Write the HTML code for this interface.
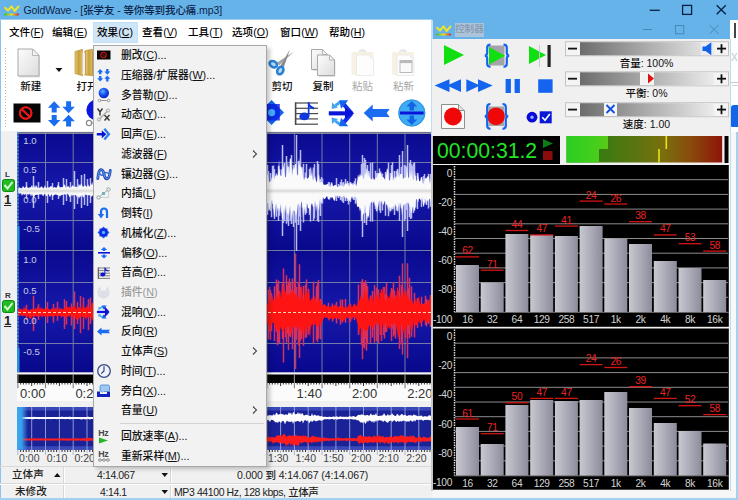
<!DOCTYPE html><html lang="zh"><head><meta charset="utf-8"><title>GoldWave</title><style>
*{margin:0;padding:0;box-sizing:border-box}
html,body{width:738px;height:500px;overflow:hidden;background:#f0f0f0}
body{position:relative;font-family:"Liberation Sans","Noto Sans CJK SC",sans-serif;font-size:12px;color:#000;font-weight:500}
.a{position:absolute}
.t{position:absolute;white-space:nowrap;line-height:1}
u{text-decoration:underline;text-underline-offset:1px}
.mi{position:absolute;left:121px;white-space:nowrap;line-height:14px;font-size:10.8px;color:#111}
.dis{color:#9a9a9a}
svg{position:absolute;overflow:visible}
</style></head><body><div class="a" style="left:0;top:0;width:738px;height:20px;background:#66b3ea"></div><div class="a" style="left:0;top:19px;width:432px;height:1px;background:#9ccef2"></div>
<svg style="left:0;top:0" width="24" height="20" viewBox="0 0 24 20"><defs><linearGradient id="ib" x1="0" x2="1"><stop offset="0" stop-color="#30c030"/><stop offset="0.5" stop-color="#e8e020"/><stop offset="1" stop-color="#e02020"/></linearGradient></defs><polyline points="4.5,7.200 8,10.500 11.500,6.300 14.600,11 19,5.800" fill="none" stroke="#f0e428" stroke-width="2" stroke-linejoin="round"/><rect x="4" y="13.600" width="15" height="1.800" rx="0.900" fill="url(#ib)"/></svg>
<div class="t" style="left:23.5px;top:5px;font-size:10.5px;letter-spacing:-0.1px;color:#0c2448" id="ttl">GoldWave - [张学友 - 等你等到我心痛.mp3]</div>
<svg style="left:640px;top:0" width="98" height="20" viewBox="0 0 98 20"><g stroke="#0a2040" stroke-width="1.300" fill="none"><line x1="9.700" y1="10.300" x2="19.800" y2="10.300"/><rect x="42.600" y="5.400" width="9" height="9"/><line x1="76.700" y1="5.200" x2="85.800" y2="14.300"/><line x1="85.800" y1="5.200" x2="76.700" y2="14.300"/></g></svg>
<div class="a" style="left:0;top:20px;width:1.2px;height:480px;background:#8cc2ec"></div>
<div class="a" style="left:1px;top:20px;width:431px;height:24px;background:#fff"></div>
<div class="a" style="left:92.700px;top:21.500px;width:45px;height:21.500px;background:#cfe6f8;border:1px solid #c4e0f6"></div>
<div class="t mb" style="left:9px;top:27px;font-size:10.6px">文件(<u>F</u>)</div>
<div class="t mb" style="left:52px;top:27px;font-size:10.6px">编辑(<u>E</u>)</div>
<div class="t mb" style="left:97px;top:27px;font-size:10.6px">效果(<u>C</u>)</div>
<div class="t mb" style="left:142px;top:27px;font-size:10.6px">查看(<u>V</u>)</div>
<div class="t mb" style="left:188px;top:27px;font-size:10.6px">工具(<u>T</u>)</div>
<div class="t mb" style="left:232px;top:27px;font-size:10.6px">选项(<u>O</u>)</div>
<div class="t mb" style="left:280px;top:27px;font-size:10.6px">窗口(<u>W</u>)</div>
<div class="t mb" style="left:329px;top:27px;font-size:10.6px">帮助(<u>H</u>)</div>
<div class="a" style="left:1px;top:44px;width:431px;height:86.5px;background:#fff"></div>
<div class="a" style="left:728px;top:20px;width:10px;height:112px;background:#fff"></div>
<div class="a" style="left:731px;top:105px;width:7px;height:22px;background:#1464e8;border-radius:3px 0 0 1px"></div><div class="a" style="left:734px;top:22.500px;width:1.500px;height:15px;background:#444"></div><div class="t" style="left:731px;top:53px;font-size:10px;color:#c4c4c4">X</div><div class="a" style="left:731px;top:82px;width:7px;height:1px;background:#c8c8c8"></div><div class="a" style="left:732px;top:85px;width:6px;height:1px;background:#d4d4d4"></div>
<div class="a" style="left:5px;top:48px;width:1px;height:80px;background:repeating-linear-gradient(#b0b0b0 0 1px,#fff 1px 3px)"></div>
<div class="a" style="left:1.2px;top:130.5px;width:430.8px;height:336px;background:#f0f0f0"></div>
<svg style="left:0;top:0" width="738" height="500" viewBox="0 0 738 500"><defs><linearGradient id="wbg" x1="0" y1="0" x2="0" y2="1"><stop offset="0" stop-color="#0a0a90"/><stop offset="0.5" stop-color="#1618aa"/><stop offset="1" stop-color="#08088c"/></linearGradient><linearGradient id="ovl" x1="0" x2="1"><stop offset="0" stop-color="#3aa8f0"/><stop offset="0.4" stop-color="#3aa0ec"/><stop offset="1" stop-color="#3aa0ec" stop-opacity="0"/></linearGradient><linearGradient id="wc" x1="0" y1="0" x2="0" y2="1"><stop offset="0" stop-color="#fff" stop-opacity="0"/><stop offset="0.5" stop-color="#b8b8b8"/><stop offset="1" stop-color="#fff" stop-opacity="0"/></linearGradient></defs><rect x="17" y="132" width="415" height="119" fill="url(#wbg)"/><rect x="17" y="251" width="415" height="122" fill="url(#wbg)"/><rect x="17" y="372.3" width="415" height="2.4" fill="#f4f4f4"/><g stroke="#737ba6" stroke-width="1"><line x1="17.9" y1="132" x2="17.9" y2="372"/><line x1="45.5" y1="132" x2="45.5" y2="372"/><line x1="73.2" y1="132" x2="73.2" y2="372"/><line x1="100.8" y1="132" x2="100.8" y2="372"/><line x1="128.5" y1="132" x2="128.5" y2="372"/><line x1="156.2" y1="132" x2="156.2" y2="372"/><line x1="183.8" y1="132" x2="183.8" y2="372"/><line x1="211.4" y1="132" x2="211.4" y2="372"/><line x1="239.1" y1="132" x2="239.1" y2="372"/><line x1="266.8" y1="132" x2="266.8" y2="372"/><line x1="294.4" y1="132" x2="294.4" y2="372"/><line x1="322.0" y1="132" x2="322.0" y2="372"/><line x1="349.7" y1="132" x2="349.7" y2="372"/><line x1="377.3" y1="132" x2="377.3" y2="372"/><line x1="405.0" y1="132" x2="405.0" y2="372"/><line x1="432.6" y1="132" x2="432.6" y2="372"/><line x1="17" y1="162.5" x2="432" y2="162.5"/><line x1="17" y1="220.5" x2="432" y2="220.5"/><line x1="17" y1="250.5" x2="432" y2="250.5"/><line x1="17" y1="282.5" x2="432" y2="282.5"/><line x1="17" y1="343.5" x2="432" y2="343.5"/></g><rect x="17" y="132.200" width="415" height="1.800" fill="#868c96"/><path d="M26.5,182.0V199.0M33.5,176.0V208.0M38.5,182.0V199.0M47.5,181.0V203.0M52.5,183.0V200.0M58.5,182.0V199.0M63.5,178.0V205.0M66.5,179.0V201.0M70.5,182.0V202.0M74.5,171.0V209.0M77.5,179.0V204.0M81.5,175.0V208.0M84.5,174.0V205.0M87.5,179.0V206.0M90.5,178.0V203.0M267.5,165.0V215.0M270.5,173.0V211.0M274.5,169.0V219.0M278.5,166.0V221.0M282.5,145.0V236.0M284.5,163.0V221.0M286.5,160.0V217.0M288.5,167.0V226.0M291.5,155.0V221.0M293.5,165.0V227.0M296.5,135.0V251.0M298.5,161.0V225.0M300.5,150.0V231.0M303.5,167.0V219.0M306.5,164.0V213.0M309.5,169.0V215.0M313.5,171.0V217.0M317.5,161.0V221.0M318.5,164.0V222.0M321.5,177.0V203.0M328.5,182.0V199.0M336.5,178.0V201.0M340.5,182.0V200.0M345.5,179.0V201.0M350.5,182.0V202.0M354.5,181.0V200.0M361.5,165.0V221.0M362.5,155.0V237.0M364.5,161.0V223.0M366.5,169.0V225.0M367.5,165.0V211.0M370.5,171.0V219.0M372.5,165.0V213.0M376.5,173.0V211.0M380.5,174.0V213.0M385.5,172.0V209.0M390.5,173.0V211.0M394.5,171.0V215.0M397.5,169.0V211.0M399.5,155.0V221.0M402.5,151.0V237.0M404.5,165.0V221.0M407.5,145.0V231.0M409.5,163.0V217.0M410.5,160.0V219.0M413.5,171.0V213.0M417.5,175.0V209.0M421.5,177.0V207.0M426.5,178.0V205.0M430.5,174.0V206.0M267.5,173.1V208.3M268.5,170.9V210.4M271.5,177.7V217.2M272.5,165.8V204.0M273.5,165.5V208.7M276.5,173.6V216.7M278.5,170.1V215.2M279.5,169.8V215.7M281.5,169.2V212.6M283.5,172.1V223.0M286.5,156.1V223.8M287.5,166.7V221.5M290.5,158.7V220.7M291.5,162.6V224.1M295.5,168.1V222.8M296.5,169.2V218.8M299.5,166.5V216.6M302.5,167.2V207.5M303.5,163.8V222.6M305.5,172.6V214.7M310.5,167.6V221.4M313.5,167.6V221.0M314.5,164.1V218.5M320.5,179.1V215.9M322.5,178.5V203.4M329.5,182.2V199.4M338.5,183.9V198.1M341.5,179.6V200.4M342.5,182.9V201.7M343.5,182.1V203.0M347.5,181.1V201.1M348.5,183.0V204.6M353.5,183.1V199.8M355.5,178.2V203.7M361.5,164.1V213.8M363.5,162.9V209.9M364.5,157.9V222.6M365.5,160.1V213.1M368.5,171.1V207.0M370.5,162.9V221.4M372.5,162.2V221.4M375.5,170.8V209.0M377.5,173.4V207.2M379.5,168.6V210.6M382.5,173.6V210.4M385.5,173.6V215.8M388.5,162.7V216.2M391.5,164.9V206.8M392.5,161.9V208.9M396.5,170.7V210.5M401.5,166.7V208.2M402.5,174.2V220.5M405.5,165.4V219.3M406.5,166.4V210.1M407.5,171.5V220.5M411.5,164.2V218.5M412.5,166.3V206.5M413.5,163.3V205.1M414.5,162.2V210.7M415.5,175.8V207.4M417.5,173.1V205.1M423.5,176.1V201.6M424.5,174.0V203.2M428.5,173.7V208.6M430.5,178.1V206.8M94.5,161.2V209.9M97.5,168.1V213.3M100.5,178.4V210.7M103.5,176.7V203.7M106.5,182.0V205.0M109.5,159.0V209.6M112.5,166.8V214.9M115.5,159.2V209.0M118.5,174.6V207.9M121.5,174.0V221.2M124.5,159.5V207.8M127.5,173.3V214.0M130.5,167.0V215.4M133.5,175.2V201.2M136.5,175.1V202.6M139.5,167.3V202.7M142.5,179.0V217.0M145.5,173.5V221.1M148.5,168.3V223.0M151.5,176.6V214.1M154.5,160.4V203.6M157.5,156.4V206.2M160.5,160.6V226.6M163.5,159.4V210.1M166.5,177.2V215.0M169.5,156.8V209.6M172.5,157.4V205.8M175.5,156.9V203.2M178.5,171.6V225.0M181.5,159.4V225.2M184.5,158.4V221.3M187.5,162.1V207.1M190.5,168.4V206.7M193.5,161.3V219.5M196.5,172.8V204.5M199.5,154.9V223.2M202.5,165.3V216.5M205.5,157.7V214.3M208.5,169.1V211.5M211.5,172.6V203.6M214.5,162.8V213.4M217.5,164.7V204.6M220.5,170.1V206.5M223.5,175.9V209.5M226.5,158.3V212.9M229.5,169.0V218.3M232.5,173.2V203.2M235.5,165.8V215.5M238.5,162.8V214.0M241.5,161.9V221.2M244.5,173.4V215.0M247.5,167.7V208.0M250.5,169.6V216.1M253.5,157.5V224.8M256.5,173.6V217.7M259.5,179.5V203.1M262.5,168.2V222.9M265.5,177.0V220.2" stroke="#b8bcf2" stroke-width="1.5" fill="none"/><polygon points="18,189.2 19,186.9 20,188.0 21,188.2 22,188.2 23,185.7 24,187.6 25,188.1 26,186.2 27,186.4 28,188.2 29,187.6 30,187.6 31,187.0 32,184.8 33,188.2 34,184.8 35,187.9 36,184.7 37,187.1 38,188.1 39,187.9 40,187.8 41,186.7 42,186.2 43,188.6 44,187.7 45,184.9 46,188.0 47,187.8 48,187.0 49,187.9 50,186.3 51,186.4 52,186.2 53,188.3 54,187.3 55,186.9 56,188.0 57,187.0 58,184.6 59,185.9 60,187.4 61,187.1 62,187.3 63,187.1 64,184.4 65,184.9 66,188.0 67,186.8 68,186.3 69,186.6 70,188.2 71,187.7 72,185.5 73,185.5 74,186.9 75,186.7 76,186.5 77,187.4 78,187.0 79,183.6 80,186.3 81,183.4 82,184.7 83,187.3 84,186.0 85,185.6 86,185.8 87,187.4 88,183.9 89,186.4 90,186.2 91,182.8 92,185.4 93,180.9 94,185.5 95,184.4 96,183.9 97,182.0 98,185.4 99,186.0 100,184.8 101,184.6 102,183.6 103,183.5 104,182.8 105,177.1 106,177.5 107,180.3 108,183.6 109,180.9 110,184.9 111,183.6 112,176.6 113,177.7 114,181.7 115,181.9 116,180.5 117,181.8 118,176.9 119,181.7 120,179.9 121,182.4 122,180.3 123,183.6 124,183.2 125,179.9 126,183.0 127,180.0 128,179.0 129,180.6 130,181.3 131,180.4 132,177.5 133,181.4 134,183.0 135,182.4 136,181.9 137,180.4 138,181.7 139,181.1 140,177.6 141,180.5 142,170.8 143,181.3 144,174.5 145,177.3 146,182.7 147,180.7 148,180.9 149,180.4 150,174.9 151,173.6 152,172.2 153,176.7 154,182.7 155,180.1 156,182.7 157,182.3 158,180.8 159,178.4 160,172.4 161,181.1 162,178.4 163,182.6 164,182.1 165,177.3 166,178.1 167,176.7 168,175.2 169,169.1 170,180.0 171,176.3 172,181.8 173,173.1 174,178.5 175,179.7 176,177.3 177,171.7 178,177.8 179,181.0 180,172.0 181,176.8 182,178.9 183,176.3 184,166.0 185,177.7 186,176.1 187,172.7 188,181.7 189,175.9 190,181.1 191,178.7 192,172.0 193,182.1 194,172.3 195,175.7 196,179.2 197,172.4 198,180.3 199,177.6 200,177.0 201,175.8 202,176.1 203,175.9 204,170.4 205,178.4 206,176.7 207,178.6 208,168.6 209,178.8 210,181.3 211,176.1 212,180.8 213,170.0 214,176.0 215,178.5 216,166.1 217,178.8 218,175.7 219,174.7 220,180.8 221,181.7 222,181.3 223,181.0 224,181.5 225,175.5 226,176.2 227,176.8 228,179.1 229,165.4 230,178.0 231,176.8 232,176.8 233,176.9 234,174.4 235,179.9 236,175.8 237,180.2 238,169.2 239,178.8 240,178.5 241,167.0 242,168.9 243,179.4 244,180.3 245,178.2 246,177.1 247,182.3 248,178.0 249,170.8 250,176.1 251,174.2 252,181.7 253,180.3 254,182.4 255,176.4 256,180.6 257,174.8 258,183.1 259,182.8 260,180.3 261,172.1 262,180.1 263,176.4 264,181.8 265,178.3 266,176.8 267,174.0 268,175.4 269,181.9 270,181.8 271,180.6 272,180.1 273,168.8 274,179.7 275,176.8 276,174.9 277,175.6 278,175.2 279,159.8 280,174.4 281,176.3 282,175.6 283,163.7 284,168.7 285,177.3 286,176.7 287,170.1 288,160.6 289,174.2 290,158.3 291,159.6 292,176.1 293,167.2 294,170.1 295,164.4 296,163.6 297,174.0 298,175.7 299,157.8 300,167.0 301,166.1 302,168.9 303,177.1 304,180.6 305,176.8 306,177.9 307,178.4 308,178.4 309,176.8 310,173.0 311,176.8 312,168.4 313,180.8 314,178.8 315,175.4 316,180.7 317,182.5 318,176.6 319,174.0 320,183.3 321,181.6 322,182.0 323,183.4 324,185.3 325,184.4 326,184.8 327,184.3 328,183.8 329,186.4 330,187.1 331,183.5 332,181.8 333,186.2 334,185.5 335,185.0 336,184.8 337,186.4 338,186.9 339,186.4 340,184.6 341,186.5 342,184.7 343,186.7 344,185.9 345,183.3 346,184.5 347,182.5 348,184.3 349,186.7 350,181.8 351,184.2 352,182.5 353,185.3 354,183.9 355,183.8 356,186.5 357,182.7 358,174.3 359,177.4 360,173.3 361,176.5 362,173.9 363,178.2 364,179.1 365,171.8 366,174.9 367,167.3 368,177.2 369,170.1 370,178.1 371,179.0 372,179.3 373,177.2 374,179.9 375,179.0 376,177.0 377,178.0 378,172.9 379,173.2 380,173.6 381,170.6 382,177.3 383,176.7 384,178.1 385,179.7 386,175.6 387,167.7 388,170.4 389,180.1 390,180.7 391,175.9 392,171.3 393,180.9 394,176.2 395,178.8 396,176.1 397,177.7 398,168.1 399,177.6 400,173.9 401,174.3 402,173.3 403,179.0 404,177.8 405,177.8 406,177.0 407,166.1 408,176.6 409,178.8 410,169.0 411,177.4 412,170.3 413,180.7 414,178.2 415,170.6 416,180.8 417,180.6 418,171.9 419,180.6 420,181.6 421,177.7 422,177.2 423,183.9 424,182.9 425,177.6 426,179.2 427,177.3 428,175.8 429,177.1 430,183.8 431,179.1 432,179.7 432,204.2 431,202.8 430,198.6 429,199.6 428,202.0 427,199.8 426,204.7 425,198.0 424,207.2 423,205.3 422,197.3 421,200.4 420,199.2 419,198.2 418,203.1 417,199.8 416,198.8 415,209.5 414,210.4 413,205.5 412,210.7 411,213.3 410,207.1 409,204.7 408,202.3 407,203.0 406,203.2 405,205.6 404,203.8 403,207.1 402,215.9 401,202.4 400,207.5 399,202.3 398,213.6 397,206.0 396,207.2 395,203.6 394,210.2 393,205.6 392,211.8 391,206.7 390,213.7 389,206.1 388,210.1 387,204.0 386,205.6 385,200.4 384,203.3 383,205.4 382,200.2 381,204.0 380,200.3 379,201.7 378,206.2 377,213.2 376,204.6 375,207.1 374,201.3 373,203.4 372,201.2 371,203.1 370,203.5 369,218.6 368,215.2 367,220.7 366,213.2 365,204.1 364,213.2 363,214.4 362,222.3 361,207.8 360,211.7 359,206.7 358,206.8 357,206.8 356,197.3 355,196.7 354,196.9 353,199.5 352,196.3 351,198.9 350,200.3 349,201.2 348,199.0 347,198.2 346,197.4 345,198.5 344,195.6 343,196.2 342,197.4 341,196.8 340,195.6 339,197.0 338,195.3 337,197.1 336,195.1 335,200.4 334,200.8 333,198.5 332,196.8 331,198.6 330,196.8 329,199.9 328,198.6 327,196.1 326,197.5 325,198.7 324,199.3 323,196.9 322,200.0 321,204.6 320,198.2 319,210.7 318,207.9 317,203.9 316,211.9 315,200.8 314,206.7 313,207.0 312,203.0 311,205.6 310,213.0 309,207.9 308,208.4 307,202.8 306,207.2 305,214.2 304,206.6 303,218.6 302,201.6 301,203.2 300,208.3 299,204.4 298,203.4 297,212.0 296,216.6 295,211.3 294,210.7 293,210.0 292,220.5 291,212.2 290,205.6 289,216.4 288,212.6 287,215.3 286,204.7 285,213.7 284,207.2 283,218.6 282,218.8 281,203.2 280,211.6 279,207.5 278,211.6 277,206.9 276,203.1 275,212.9 274,218.3 273,203.8 272,199.6 271,202.3 270,210.6 269,208.5 268,202.9 267,203.1 266,199.5 265,199.2 264,207.3 263,202.6 262,200.5 261,205.5 260,200.2 259,200.0 258,204.1 257,210.7 256,209.3 255,204.8 254,210.3 253,202.9 252,200.8 251,208.4 250,204.7 249,203.6 248,204.6 247,202.9 246,208.0 245,209.3 244,203.0 243,205.4 242,202.2 241,205.0 240,208.9 239,203.5 238,204.3 237,200.8 236,216.3 235,202.4 234,204.0 233,200.6 232,206.5 231,205.8 230,201.8 229,205.6 228,210.9 227,203.8 226,213.3 225,201.6 224,201.3 223,200.8 222,206.1 221,206.3 220,201.3 219,204.3 218,211.7 217,206.1 216,204.7 215,204.9 214,209.5 213,209.7 212,207.2 211,216.5 210,204.4 209,201.8 208,204.0 207,202.7 206,208.0 205,202.7 204,201.1 203,205.4 202,206.0 201,201.8 200,205.2 199,209.5 198,200.3 197,202.0 196,202.8 195,208.9 194,200.2 193,200.7 192,205.1 191,208.3 190,201.8 189,206.1 188,200.8 187,201.6 186,212.9 185,201.6 184,208.7 183,202.8 182,202.3 181,205.9 180,201.0 179,207.6 178,202.3 177,206.8 176,200.8 175,200.2 174,211.3 173,202.4 172,209.0 171,200.6 170,204.3 169,206.2 168,200.9 167,202.9 166,206.8 165,204.7 164,200.8 163,202.2 162,209.3 161,200.3 160,201.8 159,204.2 158,211.1 157,206.0 156,200.9 155,203.8 154,212.3 153,201.4 152,201.0 151,200.7 150,203.1 149,202.8 148,201.7 147,206.1 146,201.9 145,202.1 144,204.0 143,200.7 142,200.8 141,206.1 140,199.6 139,204.9 138,202.8 137,203.4 136,210.9 135,198.7 134,206.9 133,201.2 132,201.0 131,200.7 130,208.3 129,210.7 128,200.0 127,198.2 126,204.2 125,206.2 124,198.9 123,198.4 122,203.1 121,199.4 120,204.6 119,205.4 118,198.4 117,200.0 116,201.6 115,198.0 114,205.5 113,199.4 112,200.4 111,205.3 110,206.9 109,198.8 108,197.3 107,199.0 106,199.7 105,202.9 104,196.7 103,198.4 102,201.6 101,198.2 100,198.4 99,198.8 98,200.3 97,200.2 96,196.1 95,196.8 94,198.3 93,195.3 92,196.2 91,196.7 90,194.9 89,195.6 88,195.0 87,195.3 86,194.7 85,194.5 84,196.4 83,197.8 82,194.4 81,196.8 80,196.2 79,199.1 78,196.1 77,197.3 76,194.9 75,194.9 74,195.5 73,194.6 72,196.6 71,194.3 70,197.4 69,196.1 68,194.1 67,193.6 66,195.1 65,194.3 64,194.3 63,194.6 62,195.1 61,195.3 60,196.8 59,195.2 58,195.1 57,194.9 56,194.6 55,194.6 54,195.3 53,196.0 52,194.2 51,195.0 50,197.4 49,195.1 48,193.6 47,196.0 46,196.0 45,193.6 44,194.7 43,196.6 42,194.3 41,194.5 40,194.3 39,194.2 38,195.0 37,194.5 36,195.1 35,195.1 34,197.6 33,196.6 32,194.0 31,196.8 30,193.5 29,194.8 28,194.2 27,194.3 26,193.4 25,194.6 24,194.7 23,193.6 22,196.0 21,193.1 20,193.4 19,193.5 18,193.1" fill="#fafafa"/><rect x="18" y="187" width="414" height="8" fill="url(#wc)" opacity="0.55"/><path d="M26.5,304.8V320.2M33.5,295.8V331.0M38.5,304.2V319.7M47.5,302.0V323.1M53.5,303.9V322.8M57.5,301.7V320.8M64.5,299.2V329.1M66.5,300.9V324.5M71.5,303.6V325.4M74.5,291.6V328.9M77.5,301.8V324.0M80.5,296.1V333.3M83.5,297.4V329.0M88.5,299.1V330.3M90.5,297.7V324.0M268.5,289.6V339.5M271.5,293.0V330.9M274.5,286.2V341.1M278.5,285.4V342.5M283.5,268.4V362.5M283.5,281.4V342.9M286.5,275.3V342.4M288.5,284.3V349.9M292.5,278.6V348.7M292.5,285.3V349.3M295.5,253.4V369.1M298.5,282.0V345.3M299.5,264.3V357.9M303.5,285.8V345.7M306.5,279.5V331.4M308.5,288.7V334.8M313.5,290.6V343.4M316.5,286.3V340.2M318.5,280.1V338.6M321.5,300.8V324.1M328.5,302.7V319.3M336.5,301.8V323.6M340.5,303.8V320.3M345.5,299.1V322.8M350.5,303.7V321.7M354.5,303.7V320.0M361.5,281.3V344.7M362.5,278.9V359.2M364.5,282.5V348.6M366.5,286.5V350.7M366.5,283.8V332.7M370.5,295.4V343.2M372.5,291.0V337.5M376.5,294.0V335.2M381.5,295.1V331.7M385.5,295.0V331.6M391.5,293.0V334.5M394.5,290.7V334.6M397.5,293.1V329.6M399.5,275.7V349.0M402.5,263.6V354.4M405.5,290.5V338.0M407.5,263.2V358.2M409.5,286.7V338.2M409.5,277.7V337.1M414.5,292.8V331.4M417.5,297.9V327.9M421.5,296.8V326.2M426.5,299.1V326.6M430.5,294.9V327.1M269.5,286.7V332.1M270.5,290.0V339.7M276.5,279.5V331.8M277.5,283.7V345.3M278.5,280.4V337.0M279.5,291.2V343.2M282.5,283.4V338.8M285.5,292.7V336.9M287.5,285.1V333.8M288.5,281.4V334.2M289.5,278.6V336.0M290.5,283.1V337.3M291.5,289.7V333.6M294.5,281.6V336.6M296.5,287.0V339.8M300.5,287.1V340.9M301.5,293.1V339.1M305.5,284.6V337.9M306.5,293.7V337.3M313.5,281.6V333.8M316.5,295.7V331.1M317.5,282.8V341.9M318.5,293.9V329.8M320.5,298.7V339.2M332.5,303.4V321.5M340.5,299.5V324.8M342.5,299.5V322.4M349.5,304.3V322.9M358.5,284.5V334.9M361.5,284.6V337.2M363.5,282.5V346.7M365.5,280.2V338.7M367.5,286.2V344.2M374.5,285.1V342.8M376.5,287.4V341.0M378.5,289.6V343.5M380.5,293.3V334.7M381.5,297.4V340.9M383.5,287.0V335.0M384.5,286.9V338.5M385.5,294.0V331.9M386.5,282.7V332.0M391.5,288.0V341.1M392.5,289.4V328.8M393.5,282.1V336.6M395.5,295.6V338.6M398.5,291.4V333.3M399.5,288.9V342.2M401.5,285.0V344.5M402.5,292.1V331.1M407.5,294.7V330.3M408.5,288.2V334.0M411.5,286.2V336.7M414.5,292.7V337.4M421.5,299.5V326.7M425.5,295.7V324.9M428.5,300.2V324.1M94.5,290.5V318.1M97.5,298.5V339.4M100.5,291.1V332.6M103.5,293.8V342.2M106.5,296.2V324.8M109.5,292.2V344.8M112.5,284.5V329.0M115.5,300.4V330.1M118.5,301.3V326.2M121.5,285.2V340.3M124.5,301.9V345.9M127.5,286.4V337.6M130.5,280.8V326.7M133.5,301.0V333.7M136.5,295.6V330.7M139.5,287.6V325.6M142.5,285.7V340.9M145.5,277.6V328.8M148.5,300.5V342.7M151.5,289.2V345.5M154.5,287.7V339.3M157.5,299.1V336.6M160.5,284.3V336.4M163.5,291.0V341.4M166.5,296.8V333.7M169.5,289.5V346.4M172.5,289.5V339.1M175.5,297.9V347.6M178.5,288.1V328.6M181.5,290.7V335.9M184.5,282.6V330.8M187.5,283.5V330.0M190.5,299.9V335.4M193.5,275.4V333.1M196.5,279.5V336.5M199.5,278.4V336.8M202.5,298.6V328.3M205.5,299.5V342.5M208.5,286.4V326.0M211.5,286.3V324.9M214.5,279.5V333.3M217.5,286.8V330.8M220.5,290.8V324.8M223.5,286.5V331.0M226.5,288.4V345.1M229.5,284.6V340.7M232.5,291.7V341.3M235.5,290.2V348.6M238.5,286.9V344.7M241.5,283.1V337.7M244.5,279.4V328.2M247.5,276.5V328.5M250.5,296.0V332.5M253.5,297.8V326.9M256.5,293.7V330.9M259.5,299.5V325.5M262.5,295.4V336.1M265.5,289.8V329.8" stroke="#d8305c" stroke-width="1.5" fill="none"/><polygon points="18,310.3 19,308.8 20,308.6 21,308.8 22,309.3 23,310.1 24,305.9 25,309.1 26,307.2 27,310.1 28,309.6 29,309.7 30,310.2 31,308.7 32,309.6 33,309.1 34,309.7 35,308.4 36,308.3 37,308.6 38,305.5 39,309.5 40,306.9 41,308.7 42,307.4 43,309.5 44,308.2 45,309.0 46,308.0 47,306.5 48,309.2 49,308.7 50,309.4 51,309.5 52,307.9 53,308.7 54,308.9 55,308.7 56,306.8 57,309.3 58,309.7 59,309.2 60,306.8 61,309.5 62,307.9 63,309.8 64,308.7 65,306.5 66,307.7 67,307.9 68,306.4 69,307.9 70,305.9 71,309.5 72,305.5 73,307.6 74,305.0 75,306.3 76,308.8 77,308.8 78,306.4 79,307.8 80,306.8 81,308.1 82,309.1 83,303.6 84,307.7 85,306.8 86,308.5 87,303.6 88,308.5 89,308.0 90,308.6 91,306.9 92,301.8 93,303.7 94,308.0 95,308.2 96,306.4 97,307.1 98,306.8 99,306.2 100,302.3 101,307.2 102,306.9 103,307.1 104,305.6 105,307.0 106,306.3 107,303.7 108,306.0 109,306.2 110,304.9 111,304.1 112,305.6 113,303.0 114,303.4 115,305.4 116,302.6 117,303.6 118,301.2 119,301.0 120,299.9 121,303.5 122,304.1 123,302.0 124,293.4 125,305.2 126,295.7 127,298.2 128,305.0 129,299.7 130,299.7 131,300.3 132,302.2 133,301.7 134,296.4 135,298.0 136,300.2 137,300.1 138,303.2 139,301.2 140,300.3 141,300.9 142,300.1 143,303.1 144,299.9 145,294.0 146,302.7 147,300.4 148,301.9 149,299.1 150,299.9 151,300.9 152,297.6 153,294.8 154,297.3 155,299.2 156,303.4 157,303.6 158,302.2 159,293.0 160,300.5 161,301.1 162,299.0 163,300.7 164,296.9 165,300.4 166,294.0 167,298.0 168,292.9 169,302.4 170,296.3 171,298.1 172,300.3 173,295.1 174,302.8 175,300.2 176,301.1 177,301.8 178,295.6 179,302.5 180,292.9 181,297.5 182,297.7 183,296.9 184,299.6 185,298.3 186,297.3 187,303.1 188,293.3 189,301.1 190,299.0 191,303.0 192,300.3 193,300.9 194,292.9 195,300.0 196,296.4 197,299.8 198,297.9 199,303.2 200,289.0 201,289.5 202,299.9 203,300.4 204,290.0 205,297.4 206,296.6 207,300.5 208,293.3 209,300.2 210,287.8 211,289.0 212,303.1 213,293.9 214,290.6 215,300.8 216,294.6 217,302.4 218,300.5 219,297.2 220,301.3 221,300.8 222,293.1 223,302.8 224,293.5 225,302.4 226,298.7 227,287.6 228,301.6 229,289.1 230,294.4 231,290.0 232,297.5 233,288.6 234,292.3 235,289.4 236,297.5 237,299.8 238,298.3 239,302.8 240,302.1 241,300.4 242,300.2 243,299.2 244,296.3 245,302.0 246,299.8 247,288.2 248,294.3 249,303.5 250,293.9 251,293.0 252,294.5 253,290.3 254,303.8 255,302.7 256,303.2 257,292.6 258,303.8 259,302.1 260,297.6 261,294.3 262,301.0 263,294.3 264,296.3 265,303.0 266,295.5 267,304.1 268,304.0 269,296.1 270,301.9 271,301.2 272,294.6 273,297.7 274,301.7 275,299.9 276,292.4 277,295.9 278,298.0 279,293.9 280,289.4 281,299.2 282,283.0 283,294.0 284,277.6 285,292.9 286,290.0 287,295.8 288,292.9 289,295.6 290,292.9 291,291.2 292,293.2 293,288.8 294,292.2 295,296.0 296,292.8 297,298.9 298,292.8 299,300.6 300,297.0 301,289.1 302,284.3 303,300.2 304,298.8 305,291.8 306,287.4 307,291.7 308,294.8 309,288.5 310,300.9 311,300.1 312,297.0 313,299.2 314,299.1 315,294.4 316,301.6 317,302.7 318,296.5 319,298.0 320,302.1 321,299.3 322,306.7 323,304.7 324,304.7 325,303.8 326,307.0 327,305.2 328,306.5 329,307.1 330,307.0 331,306.1 332,306.5 333,306.2 334,305.9 335,304.5 336,304.5 337,306.3 338,307.1 339,306.6 340,306.0 341,307.0 342,304.7 343,306.2 344,307.0 345,308.3 346,307.2 347,308.3 348,305.3 349,305.9 350,303.4 351,306.3 352,307.6 353,305.3 354,305.1 355,303.5 356,306.4 357,305.4 358,301.1 359,302.2 360,299.1 361,293.9 362,298.9 363,298.2 364,293.9 365,285.3 366,300.5 367,287.4 368,296.5 369,301.7 370,297.0 371,297.8 372,295.7 373,298.7 374,302.5 375,297.0 376,291.6 377,297.5 378,291.2 379,299.7 380,297.6 381,288.6 382,289.2 383,293.1 384,286.1 385,301.3 386,300.2 387,295.0 388,296.3 389,298.4 390,293.7 391,290.6 392,302.4 393,290.2 394,298.1 395,295.3 396,301.4 397,287.7 398,287.3 399,296.2 400,297.4 401,291.8 402,300.0 403,284.6 404,296.0 405,291.5 406,288.2 407,298.7 408,293.6 409,300.6 410,299.5 411,300.1 412,299.4 413,302.7 414,303.9 415,301.9 416,297.4 417,303.7 418,299.1 419,296.1 420,303.5 421,305.4 422,303.1 423,304.2 424,303.6 425,303.0 426,305.6 427,302.0 428,299.0 429,304.1 430,295.3 431,296.1 432,299.7 432,323.5 431,321.6 430,324.9 429,319.5 428,323.0 427,322.7 426,321.9 425,321.1 424,319.3 423,321.0 422,323.0 421,321.9 420,324.2 419,320.6 418,323.6 417,324.5 416,325.7 415,324.5 414,321.1 413,325.9 412,333.0 411,327.3 410,326.8 409,324.4 408,325.8 407,323.9 406,340.3 405,329.5 404,329.1 403,335.1 402,326.1 401,324.1 400,335.5 399,334.8 398,340.1 397,328.1 396,325.5 395,323.8 394,322.6 393,327.2 392,322.7 391,325.5 390,329.4 389,328.3 388,326.1 387,331.6 386,323.8 385,322.2 384,327.9 383,327.3 382,321.9 381,338.2 380,322.7 379,326.6 378,324.5 377,322.9 376,325.5 375,323.9 374,328.9 373,329.8 372,325.9 371,327.0 370,324.9 369,326.0 368,330.6 367,330.3 366,330.2 365,332.5 364,328.5 363,329.2 362,340.7 361,329.4 360,327.8 359,335.1 358,325.3 357,322.0 356,318.0 355,317.1 354,317.2 353,317.0 352,320.3 351,317.2 350,317.6 349,317.5 348,318.7 347,317.0 346,318.9 345,318.0 344,321.4 343,319.7 342,321.6 341,320.5 340,317.7 339,319.9 338,318.6 337,318.4 336,317.7 335,318.7 334,318.4 333,320.5 332,318.4 331,317.8 330,319.6 329,321.3 328,317.3 327,318.0 326,317.6 325,317.8 324,317.4 323,320.3 322,321.3 321,327.6 320,322.0 319,328.2 318,326.5 317,327.2 316,323.8 315,324.5 314,325.1 313,324.7 312,324.1 311,327.6 310,338.5 309,329.4 308,324.9 307,333.2 306,327.8 305,337.3 304,325.5 303,338.4 302,333.2 301,328.0 300,330.7 299,324.9 298,332.6 297,325.2 296,328.3 295,326.4 294,327.3 293,327.3 292,331.8 291,334.3 290,333.7 289,325.8 288,327.6 287,327.1 286,339.9 285,326.1 284,331.1 283,332.9 282,329.8 281,329.0 280,326.0 279,334.5 278,330.7 277,330.5 276,325.9 275,329.7 274,323.9 273,322.0 272,324.0 271,325.1 270,333.3 269,326.0 268,324.1 267,322.5 266,325.3 265,323.5 264,329.6 263,331.1 262,331.0 261,321.0 260,324.5 259,325.6 258,320.7 257,325.9 256,323.6 255,323.9 254,326.6 253,330.0 252,322.6 251,326.5 250,322.9 249,325.6 248,328.8 247,324.9 246,326.2 245,325.4 244,322.1 243,324.2 242,325.1 241,330.1 240,322.6 239,324.5 238,328.1 237,332.1 236,335.7 235,326.5 234,322.3 233,328.8 232,330.6 231,321.7 230,322.9 229,323.3 228,327.3 227,323.5 226,328.4 225,324.0 224,327.9 223,324.7 222,328.3 221,325.2 220,324.7 219,327.7 218,325.1 217,334.0 216,325.5 215,324.9 214,322.3 213,326.9 212,331.8 211,322.6 210,323.0 209,322.2 208,328.7 207,334.3 206,335.9 205,327.2 204,321.9 203,325.7 202,322.0 201,322.3 200,322.0 199,323.3 198,321.7 197,329.7 196,323.4 195,330.0 194,325.4 193,323.5 192,323.9 191,329.9 190,324.8 189,322.2 188,326.3 187,322.8 186,328.7 185,326.6 184,322.1 183,325.6 182,322.8 181,323.4 180,326.0 179,322.5 178,321.5 177,323.0 176,323.9 175,326.5 174,328.0 173,323.1 172,325.7 171,332.9 170,323.6 169,327.2 168,324.9 167,326.7 166,325.5 165,335.4 164,329.3 163,325.9 162,326.7 161,325.3 160,328.6 159,323.2 158,325.0 157,333.6 156,329.3 155,325.8 154,334.9 153,329.4 152,326.4 151,321.2 150,326.0 149,323.2 148,330.4 147,328.3 146,320.5 145,323.9 144,320.6 143,320.6 142,320.6 141,321.7 140,323.8 139,324.4 138,324.3 137,326.1 136,323.2 135,324.2 134,328.5 133,328.9 132,322.5 131,325.1 130,320.2 129,324.9 128,323.3 127,319.9 126,320.1 125,322.4 124,319.6 123,324.3 122,326.6 121,329.2 120,322.5 119,325.9 118,322.5 117,319.2 116,323.3 115,320.6 114,323.2 113,318.6 112,318.7 111,323.4 110,321.9 109,321.6 108,322.9 107,318.5 106,318.3 105,318.3 104,323.7 103,323.4 102,324.4 101,318.1 100,319.1 99,320.2 98,321.0 97,318.8 96,321.9 95,318.3 94,321.8 93,318.5 92,321.6 91,316.3 90,316.8 89,316.6 88,317.4 87,317.2 86,320.4 85,316.9 84,317.7 83,317.2 82,316.4 81,316.6 80,317.0 79,320.2 78,317.9 77,319.3 76,319.7 75,316.5 74,316.3 73,320.7 72,315.8 71,316.5 70,315.2 69,317.1 68,315.9 67,316.8 66,318.5 65,316.0 64,317.4 63,316.1 62,316.5 61,318.3 60,315.1 59,316.2 58,316.4 57,316.1 56,315.8 55,316.0 54,316.3 53,318.1 52,315.9 51,316.7 50,315.9 49,316.5 48,316.6 47,315.4 46,317.0 45,317.2 44,315.8 43,315.8 42,318.8 41,315.1 40,317.2 39,315.3 38,315.2 37,317.8 36,315.6 35,316.8 34,316.6 33,315.9 32,316.5 31,318.8 30,318.4 29,318.3 28,315.3 27,317.4 26,317.2 25,315.1 24,316.3 23,315.7 22,316.5 21,314.4 20,316.8 19,315.3 18,314.9" fill="#ff1414"/><line x1="18" y1="312.5" x2="432" y2="312.5" stroke="#ffd8b0" stroke-width="1" stroke-dasharray="3 2"/><line x1="17.7" y1="132" x2="17.7" y2="372" stroke="#3aa0e8" stroke-width="1.4" stroke-dasharray="2 1.5"/><rect x="17" y="226" width="2.5" height="25" fill="#2a90e0"/><rect x="17" y="348" width="2.5" height="24" fill="#2a90e0"/><g font-size="9.600" fill="#c8cce6" font-family="Liberation Sans,sans-serif"><text x="23.3" y="144.0">1.0</text><text x="23.3" y="173.2">0.5</text><text x="23.3" y="202.5">0.0</text><text x="23.3" y="231.8">-0.5</text><text x="23.3" y="263.0">1.0</text><text x="23.3" y="293.5">0.5</text><text x="23.3" y="324.0">0.0</text><text x="23.3" y="354.5">-0.5</text></g><rect x="17" y="383" width="415" height="18" fill="#fbfbfb"/><rect x="17" y="374.5" width="415" height="8.5" fill="#000"/><g stroke-width="1"><line x1="17.9" y1="374" x2="17.9" y2="388.3" stroke="#8a8a8a" stroke-width="1.2"/><line x1="20.7" y1="382.5" x2="20.7" y2="384.5" stroke="#333"/><line x1="23.4" y1="382.5" x2="23.4" y2="384.5" stroke="#333"/><line x1="26.2" y1="382.5" x2="26.2" y2="384.5" stroke="#333"/><line x1="29.0" y1="382.5" x2="29.0" y2="384.5" stroke="#333"/><line x1="31.7" y1="382.5" x2="31.7" y2="386" stroke="#333"/><line x1="34.5" y1="382.5" x2="34.5" y2="384.5" stroke="#333"/><line x1="37.3" y1="382.5" x2="37.3" y2="384.5" stroke="#333"/><line x1="40.0" y1="382.5" x2="40.0" y2="384.5" stroke="#333"/><line x1="42.8" y1="382.5" x2="42.8" y2="384.5" stroke="#333"/><line x1="45.5" y1="374" x2="45.5" y2="388.3" stroke="#8a8a8a" stroke-width="1.2"/><line x1="48.3" y1="382.5" x2="48.3" y2="384.5" stroke="#333"/><line x1="51.1" y1="382.5" x2="51.1" y2="384.5" stroke="#333"/><line x1="53.8" y1="382.5" x2="53.8" y2="384.5" stroke="#333"/><line x1="56.6" y1="382.5" x2="56.6" y2="384.5" stroke="#333"/><line x1="59.4" y1="382.5" x2="59.4" y2="386" stroke="#333"/><line x1="62.1" y1="382.5" x2="62.1" y2="384.5" stroke="#333"/><line x1="64.9" y1="382.5" x2="64.9" y2="384.5" stroke="#333"/><line x1="67.7" y1="382.5" x2="67.7" y2="384.5" stroke="#333"/><line x1="70.4" y1="382.5" x2="70.4" y2="384.5" stroke="#333"/><line x1="73.2" y1="374" x2="73.2" y2="388.3" stroke="#8a8a8a" stroke-width="1.2"/><line x1="76.0" y1="382.5" x2="76.0" y2="384.5" stroke="#333"/><line x1="78.7" y1="382.5" x2="78.7" y2="384.5" stroke="#333"/><line x1="81.5" y1="382.5" x2="81.5" y2="384.5" stroke="#333"/><line x1="84.3" y1="382.5" x2="84.3" y2="384.5" stroke="#333"/><line x1="87.0" y1="382.5" x2="87.0" y2="386" stroke="#333"/><line x1="89.8" y1="382.5" x2="89.8" y2="384.5" stroke="#333"/><line x1="92.6" y1="382.5" x2="92.6" y2="384.5" stroke="#333"/><line x1="95.3" y1="382.5" x2="95.3" y2="384.5" stroke="#333"/><line x1="98.1" y1="382.5" x2="98.1" y2="384.5" stroke="#333"/><line x1="100.8" y1="374" x2="100.8" y2="388.3" stroke="#8a8a8a" stroke-width="1.2"/><line x1="103.6" y1="382.5" x2="103.6" y2="384.5" stroke="#333"/><line x1="106.4" y1="382.5" x2="106.4" y2="384.5" stroke="#333"/><line x1="109.1" y1="382.5" x2="109.1" y2="384.5" stroke="#333"/><line x1="111.9" y1="382.5" x2="111.9" y2="384.5" stroke="#333"/><line x1="114.7" y1="382.5" x2="114.7" y2="386" stroke="#333"/><line x1="117.4" y1="382.5" x2="117.4" y2="384.5" stroke="#333"/><line x1="120.2" y1="382.5" x2="120.2" y2="384.5" stroke="#333"/><line x1="123.0" y1="382.5" x2="123.0" y2="384.5" stroke="#333"/><line x1="125.7" y1="382.5" x2="125.7" y2="384.5" stroke="#333"/><line x1="128.5" y1="374" x2="128.5" y2="388.3" stroke="#8a8a8a" stroke-width="1.2"/><line x1="131.3" y1="382.5" x2="131.3" y2="384.5" stroke="#333"/><line x1="134.0" y1="382.5" x2="134.0" y2="384.5" stroke="#333"/><line x1="136.8" y1="382.5" x2="136.8" y2="384.5" stroke="#333"/><line x1="139.6" y1="382.5" x2="139.6" y2="384.5" stroke="#333"/><line x1="142.3" y1="382.5" x2="142.3" y2="386" stroke="#333"/><line x1="145.1" y1="382.5" x2="145.1" y2="384.5" stroke="#333"/><line x1="147.9" y1="382.5" x2="147.9" y2="384.5" stroke="#333"/><line x1="150.6" y1="382.5" x2="150.6" y2="384.5" stroke="#333"/><line x1="153.4" y1="382.5" x2="153.4" y2="384.5" stroke="#333"/><line x1="156.2" y1="374" x2="156.2" y2="388.3" stroke="#8a8a8a" stroke-width="1.2"/><line x1="158.9" y1="382.5" x2="158.9" y2="384.5" stroke="#333"/><line x1="161.7" y1="382.5" x2="161.7" y2="384.5" stroke="#333"/><line x1="164.4" y1="382.5" x2="164.4" y2="384.5" stroke="#333"/><line x1="167.2" y1="382.5" x2="167.2" y2="384.5" stroke="#333"/><line x1="170.0" y1="382.5" x2="170.0" y2="386" stroke="#333"/><line x1="172.7" y1="382.5" x2="172.7" y2="384.5" stroke="#333"/><line x1="175.5" y1="382.5" x2="175.5" y2="384.5" stroke="#333"/><line x1="178.3" y1="382.5" x2="178.3" y2="384.5" stroke="#333"/><line x1="181.0" y1="382.5" x2="181.0" y2="384.5" stroke="#333"/><line x1="183.8" y1="374" x2="183.8" y2="388.3" stroke="#8a8a8a" stroke-width="1.2"/><line x1="186.6" y1="382.5" x2="186.6" y2="384.5" stroke="#333"/><line x1="189.3" y1="382.5" x2="189.3" y2="384.5" stroke="#333"/><line x1="192.1" y1="382.5" x2="192.1" y2="384.5" stroke="#333"/><line x1="194.9" y1="382.5" x2="194.9" y2="384.5" stroke="#333"/><line x1="197.6" y1="382.5" x2="197.6" y2="386" stroke="#333"/><line x1="200.4" y1="382.5" x2="200.4" y2="384.5" stroke="#333"/><line x1="203.2" y1="382.5" x2="203.2" y2="384.5" stroke="#333"/><line x1="205.9" y1="382.5" x2="205.9" y2="384.5" stroke="#333"/><line x1="208.7" y1="382.5" x2="208.7" y2="384.5" stroke="#333"/><line x1="211.5" y1="374" x2="211.5" y2="388.3" stroke="#8a8a8a" stroke-width="1.2"/><line x1="214.2" y1="382.5" x2="214.2" y2="384.5" stroke="#333"/><line x1="217.0" y1="382.5" x2="217.0" y2="384.5" stroke="#333"/><line x1="219.7" y1="382.5" x2="219.7" y2="384.5" stroke="#333"/><line x1="222.5" y1="382.5" x2="222.5" y2="384.5" stroke="#333"/><line x1="225.3" y1="382.5" x2="225.3" y2="386" stroke="#333"/><line x1="228.0" y1="382.5" x2="228.0" y2="384.5" stroke="#333"/><line x1="230.8" y1="382.5" x2="230.8" y2="384.5" stroke="#333"/><line x1="233.6" y1="382.5" x2="233.6" y2="384.5" stroke="#333"/><line x1="236.3" y1="382.5" x2="236.3" y2="384.5" stroke="#333"/><line x1="239.1" y1="374" x2="239.1" y2="388.3" stroke="#8a8a8a" stroke-width="1.2"/><line x1="241.9" y1="382.5" x2="241.9" y2="384.5" stroke="#333"/><line x1="244.6" y1="382.5" x2="244.6" y2="384.5" stroke="#333"/><line x1="247.4" y1="382.5" x2="247.4" y2="384.5" stroke="#333"/><line x1="250.2" y1="382.5" x2="250.2" y2="384.5" stroke="#333"/><line x1="252.9" y1="382.5" x2="252.9" y2="386" stroke="#333"/><line x1="255.7" y1="382.5" x2="255.7" y2="384.5" stroke="#333"/><line x1="258.5" y1="382.5" x2="258.5" y2="384.5" stroke="#333"/><line x1="261.2" y1="382.5" x2="261.2" y2="384.5" stroke="#333"/><line x1="264.0" y1="382.5" x2="264.0" y2="384.5" stroke="#333"/><line x1="266.8" y1="374" x2="266.8" y2="388.3" stroke="#8a8a8a" stroke-width="1.2"/><line x1="269.5" y1="382.5" x2="269.5" y2="384.5" stroke="#333"/><line x1="272.3" y1="382.5" x2="272.3" y2="384.5" stroke="#333"/><line x1="275.0" y1="382.5" x2="275.0" y2="384.5" stroke="#333"/><line x1="277.8" y1="382.5" x2="277.8" y2="384.5" stroke="#333"/><line x1="280.6" y1="382.5" x2="280.6" y2="386" stroke="#333"/><line x1="283.3" y1="382.5" x2="283.3" y2="384.5" stroke="#333"/><line x1="286.1" y1="382.5" x2="286.1" y2="384.5" stroke="#333"/><line x1="288.9" y1="382.5" x2="288.9" y2="384.5" stroke="#333"/><line x1="291.6" y1="382.5" x2="291.6" y2="384.5" stroke="#333"/><line x1="294.4" y1="374" x2="294.4" y2="388.3" stroke="#8a8a8a" stroke-width="1.2"/><line x1="297.2" y1="382.5" x2="297.2" y2="384.5" stroke="#333"/><line x1="299.9" y1="382.5" x2="299.9" y2="384.5" stroke="#333"/><line x1="302.7" y1="382.5" x2="302.7" y2="384.5" stroke="#333"/><line x1="305.5" y1="382.5" x2="305.5" y2="384.5" stroke="#333"/><line x1="308.2" y1="382.5" x2="308.2" y2="386" stroke="#333"/><line x1="311.0" y1="382.5" x2="311.0" y2="384.5" stroke="#333"/><line x1="313.8" y1="382.5" x2="313.8" y2="384.5" stroke="#333"/><line x1="316.5" y1="382.5" x2="316.5" y2="384.5" stroke="#333"/><line x1="319.3" y1="382.5" x2="319.3" y2="384.5" stroke="#333"/><line x1="322.1" y1="374" x2="322.1" y2="388.3" stroke="#8a8a8a" stroke-width="1.2"/><line x1="324.8" y1="382.5" x2="324.8" y2="384.5" stroke="#333"/><line x1="327.6" y1="382.5" x2="327.6" y2="384.5" stroke="#333"/><line x1="330.3" y1="382.5" x2="330.3" y2="384.5" stroke="#333"/><line x1="333.1" y1="382.5" x2="333.1" y2="384.5" stroke="#333"/><line x1="335.9" y1="382.5" x2="335.9" y2="386" stroke="#333"/><line x1="338.6" y1="382.5" x2="338.6" y2="384.5" stroke="#333"/><line x1="341.4" y1="382.5" x2="341.4" y2="384.5" stroke="#333"/><line x1="344.2" y1="382.5" x2="344.2" y2="384.5" stroke="#333"/><line x1="346.9" y1="382.5" x2="346.9" y2="384.5" stroke="#333"/><line x1="349.7" y1="374" x2="349.7" y2="388.3" stroke="#8a8a8a" stroke-width="1.2"/><line x1="352.5" y1="382.5" x2="352.5" y2="384.5" stroke="#333"/><line x1="355.2" y1="382.5" x2="355.2" y2="384.5" stroke="#333"/><line x1="358.0" y1="382.5" x2="358.0" y2="384.5" stroke="#333"/><line x1="360.8" y1="382.5" x2="360.8" y2="384.5" stroke="#333"/><line x1="363.5" y1="382.5" x2="363.5" y2="386" stroke="#333"/><line x1="366.3" y1="382.5" x2="366.3" y2="384.5" stroke="#333"/><line x1="369.1" y1="382.5" x2="369.1" y2="384.5" stroke="#333"/><line x1="371.8" y1="382.5" x2="371.8" y2="384.5" stroke="#333"/><line x1="374.6" y1="382.5" x2="374.6" y2="384.5" stroke="#333"/><line x1="377.3" y1="374" x2="377.3" y2="388.3" stroke="#8a8a8a" stroke-width="1.2"/><line x1="380.1" y1="382.5" x2="380.1" y2="384.5" stroke="#333"/><line x1="382.9" y1="382.5" x2="382.9" y2="384.5" stroke="#333"/><line x1="385.6" y1="382.5" x2="385.6" y2="384.5" stroke="#333"/><line x1="388.4" y1="382.5" x2="388.4" y2="384.5" stroke="#333"/><line x1="391.2" y1="382.5" x2="391.2" y2="386" stroke="#333"/><line x1="393.9" y1="382.5" x2="393.9" y2="384.5" stroke="#333"/><line x1="396.7" y1="382.5" x2="396.7" y2="384.5" stroke="#333"/><line x1="399.5" y1="382.5" x2="399.5" y2="384.5" stroke="#333"/><line x1="402.2" y1="382.5" x2="402.2" y2="384.5" stroke="#333"/><line x1="405.0" y1="374" x2="405.0" y2="388.3" stroke="#8a8a8a" stroke-width="1.2"/><line x1="407.8" y1="382.5" x2="407.8" y2="384.5" stroke="#333"/><line x1="410.5" y1="382.5" x2="410.5" y2="384.5" stroke="#333"/><line x1="413.3" y1="382.5" x2="413.3" y2="384.5" stroke="#333"/><line x1="416.1" y1="382.5" x2="416.1" y2="384.5" stroke="#333"/><line x1="418.8" y1="382.5" x2="418.8" y2="386" stroke="#333"/><line x1="421.6" y1="382.5" x2="421.6" y2="384.5" stroke="#333"/><line x1="424.4" y1="382.5" x2="424.4" y2="384.5" stroke="#333"/><line x1="427.1" y1="382.5" x2="427.1" y2="384.5" stroke="#333"/><line x1="429.9" y1="382.5" x2="429.9" y2="384.5" stroke="#333"/></g><g font-size="13" fill="#333" font-family="Liberation Sans,sans-serif"><text x="20.1" y="398.3">0:00</text><text x="75.4" y="398.3">0:20</text><text x="130.7" y="398.3">0:40</text><text x="186.0" y="398.3">1:00</text><text x="241.3" y="398.3">1:20</text><text x="296.6" y="398.3">1:40</text><text x="351.9" y="398.3">2:00</text><text x="407.2" y="398.3">2:20</text></g><rect x="17" y="407" width="415" height="42.700" fill="#1a2298"/><rect x="17" y="407" width="415" height="3.500" fill="#3848b8"/><rect x="17" y="446.200" width="415" height="3.500" fill="#3848b8"/><g stroke="#a4acd8" stroke-width="1" opacity="0.85"><line x1="17.9" y1="407" x2="17.9" y2="455"/><line x1="31.7" y1="407" x2="31.7" y2="453"/><line x1="45.5" y1="407" x2="45.5" y2="455"/><line x1="59.4" y1="407" x2="59.4" y2="453"/><line x1="73.2" y1="407" x2="73.2" y2="455"/><line x1="87.0" y1="407" x2="87.0" y2="453"/><line x1="100.8" y1="407" x2="100.8" y2="455"/><line x1="114.7" y1="407" x2="114.7" y2="453"/><line x1="128.5" y1="407" x2="128.5" y2="455"/><line x1="142.3" y1="407" x2="142.3" y2="453"/><line x1="156.2" y1="407" x2="156.2" y2="455"/><line x1="170.0" y1="407" x2="170.0" y2="453"/><line x1="183.8" y1="407" x2="183.8" y2="455"/><line x1="197.6" y1="407" x2="197.6" y2="453"/><line x1="211.4" y1="407" x2="211.4" y2="455"/><line x1="225.3" y1="407" x2="225.3" y2="453"/><line x1="239.1" y1="407" x2="239.1" y2="455"/><line x1="252.9" y1="407" x2="252.9" y2="453"/><line x1="266.8" y1="407" x2="266.8" y2="455"/><line x1="280.6" y1="407" x2="280.6" y2="453"/><line x1="294.4" y1="407" x2="294.4" y2="455"/><line x1="308.2" y1="407" x2="308.2" y2="453"/><line x1="322.0" y1="407" x2="322.0" y2="455"/><line x1="335.9" y1="407" x2="335.9" y2="453"/><line x1="349.7" y1="407" x2="349.7" y2="455"/><line x1="363.5" y1="407" x2="363.5" y2="453"/><line x1="377.3" y1="407" x2="377.3" y2="455"/><line x1="391.2" y1="407" x2="391.2" y2="453"/><line x1="405.0" y1="407" x2="405.0" y2="455"/><line x1="418.8" y1="407" x2="418.8" y2="453"/><line x1="432.6" y1="407" x2="432.6" y2="455"/></g><g stroke="#333" stroke-width="1"><line x1="20.7" y1="450" x2="20.7" y2="452"/><line x1="23.4" y1="450" x2="23.4" y2="452"/><line x1="26.2" y1="450" x2="26.2" y2="452"/><line x1="29.0" y1="450" x2="29.0" y2="452"/><line x1="34.5" y1="450" x2="34.5" y2="452"/><line x1="37.3" y1="450" x2="37.3" y2="452"/><line x1="40.0" y1="450" x2="40.0" y2="452"/><line x1="42.8" y1="450" x2="42.8" y2="452"/><line x1="48.3" y1="450" x2="48.3" y2="452"/><line x1="51.1" y1="450" x2="51.1" y2="452"/><line x1="53.8" y1="450" x2="53.8" y2="452"/><line x1="56.6" y1="450" x2="56.6" y2="452"/><line x1="62.1" y1="450" x2="62.1" y2="452"/><line x1="64.9" y1="450" x2="64.9" y2="452"/><line x1="67.7" y1="450" x2="67.7" y2="452"/><line x1="70.4" y1="450" x2="70.4" y2="452"/><line x1="76.0" y1="450" x2="76.0" y2="452"/><line x1="78.7" y1="450" x2="78.7" y2="452"/><line x1="81.5" y1="450" x2="81.5" y2="452"/><line x1="84.3" y1="450" x2="84.3" y2="452"/><line x1="89.8" y1="450" x2="89.8" y2="452"/><line x1="92.6" y1="450" x2="92.6" y2="452"/><line x1="95.3" y1="450" x2="95.3" y2="452"/><line x1="98.1" y1="450" x2="98.1" y2="452"/><line x1="103.6" y1="450" x2="103.6" y2="452"/><line x1="106.4" y1="450" x2="106.4" y2="452"/><line x1="109.1" y1="450" x2="109.1" y2="452"/><line x1="111.9" y1="450" x2="111.9" y2="452"/><line x1="117.4" y1="450" x2="117.4" y2="452"/><line x1="120.2" y1="450" x2="120.2" y2="452"/><line x1="123.0" y1="450" x2="123.0" y2="452"/><line x1="125.7" y1="450" x2="125.7" y2="452"/><line x1="131.3" y1="450" x2="131.3" y2="452"/><line x1="134.0" y1="450" x2="134.0" y2="452"/><line x1="136.8" y1="450" x2="136.8" y2="452"/><line x1="139.6" y1="450" x2="139.6" y2="452"/><line x1="145.1" y1="450" x2="145.1" y2="452"/><line x1="147.9" y1="450" x2="147.9" y2="452"/><line x1="150.6" y1="450" x2="150.6" y2="452"/><line x1="153.4" y1="450" x2="153.4" y2="452"/><line x1="158.9" y1="450" x2="158.9" y2="452"/><line x1="161.7" y1="450" x2="161.7" y2="452"/><line x1="164.4" y1="450" x2="164.4" y2="452"/><line x1="167.2" y1="450" x2="167.2" y2="452"/><line x1="172.7" y1="450" x2="172.7" y2="452"/><line x1="175.5" y1="450" x2="175.5" y2="452"/><line x1="178.3" y1="450" x2="178.3" y2="452"/><line x1="181.0" y1="450" x2="181.0" y2="452"/><line x1="186.6" y1="450" x2="186.6" y2="452"/><line x1="189.3" y1="450" x2="189.3" y2="452"/><line x1="192.1" y1="450" x2="192.1" y2="452"/><line x1="194.9" y1="450" x2="194.9" y2="452"/><line x1="200.4" y1="450" x2="200.4" y2="452"/><line x1="203.2" y1="450" x2="203.2" y2="452"/><line x1="205.9" y1="450" x2="205.9" y2="452"/><line x1="208.7" y1="450" x2="208.7" y2="452"/><line x1="214.2" y1="450" x2="214.2" y2="452"/><line x1="217.0" y1="450" x2="217.0" y2="452"/><line x1="219.7" y1="450" x2="219.7" y2="452"/><line x1="222.5" y1="450" x2="222.5" y2="452"/><line x1="228.0" y1="450" x2="228.0" y2="452"/><line x1="230.8" y1="450" x2="230.8" y2="452"/><line x1="233.6" y1="450" x2="233.6" y2="452"/><line x1="236.3" y1="450" x2="236.3" y2="452"/><line x1="241.9" y1="450" x2="241.9" y2="452"/><line x1="244.6" y1="450" x2="244.6" y2="452"/><line x1="247.4" y1="450" x2="247.4" y2="452"/><line x1="250.2" y1="450" x2="250.2" y2="452"/><line x1="255.7" y1="450" x2="255.7" y2="452"/><line x1="258.5" y1="450" x2="258.5" y2="452"/><line x1="261.2" y1="450" x2="261.2" y2="452"/><line x1="264.0" y1="450" x2="264.0" y2="452"/><line x1="269.5" y1="450" x2="269.5" y2="452"/><line x1="272.3" y1="450" x2="272.3" y2="452"/><line x1="275.0" y1="450" x2="275.0" y2="452"/><line x1="277.8" y1="450" x2="277.8" y2="452"/><line x1="283.3" y1="450" x2="283.3" y2="452"/><line x1="286.1" y1="450" x2="286.1" y2="452"/><line x1="288.9" y1="450" x2="288.9" y2="452"/><line x1="291.6" y1="450" x2="291.6" y2="452"/><line x1="297.2" y1="450" x2="297.2" y2="452"/><line x1="299.9" y1="450" x2="299.9" y2="452"/><line x1="302.7" y1="450" x2="302.7" y2="452"/><line x1="305.5" y1="450" x2="305.5" y2="452"/><line x1="311.0" y1="450" x2="311.0" y2="452"/><line x1="313.8" y1="450" x2="313.8" y2="452"/><line x1="316.5" y1="450" x2="316.5" y2="452"/><line x1="319.3" y1="450" x2="319.3" y2="452"/><line x1="324.8" y1="450" x2="324.8" y2="452"/><line x1="327.6" y1="450" x2="327.6" y2="452"/><line x1="330.3" y1="450" x2="330.3" y2="452"/><line x1="333.1" y1="450" x2="333.1" y2="452"/><line x1="338.6" y1="450" x2="338.6" y2="452"/><line x1="341.4" y1="450" x2="341.4" y2="452"/><line x1="344.2" y1="450" x2="344.2" y2="452"/><line x1="346.9" y1="450" x2="346.9" y2="452"/><line x1="352.5" y1="450" x2="352.5" y2="452"/><line x1="355.2" y1="450" x2="355.2" y2="452"/><line x1="358.0" y1="450" x2="358.0" y2="452"/><line x1="360.8" y1="450" x2="360.8" y2="452"/><line x1="366.3" y1="450" x2="366.3" y2="452"/><line x1="369.1" y1="450" x2="369.1" y2="452"/><line x1="371.8" y1="450" x2="371.8" y2="452"/><line x1="374.6" y1="450" x2="374.6" y2="452"/><line x1="380.1" y1="450" x2="380.1" y2="452"/><line x1="382.9" y1="450" x2="382.9" y2="452"/><line x1="385.6" y1="450" x2="385.6" y2="452"/><line x1="388.4" y1="450" x2="388.4" y2="452"/><line x1="393.9" y1="450" x2="393.9" y2="452"/><line x1="396.7" y1="450" x2="396.7" y2="452"/><line x1="399.5" y1="450" x2="399.5" y2="452"/><line x1="402.2" y1="450" x2="402.2" y2="452"/><line x1="407.8" y1="450" x2="407.8" y2="452"/><line x1="410.5" y1="450" x2="410.5" y2="452"/><line x1="413.3" y1="450" x2="413.3" y2="452"/><line x1="416.1" y1="450" x2="416.1" y2="452"/><line x1="421.6" y1="450" x2="421.6" y2="452"/><line x1="424.4" y1="450" x2="424.4" y2="452"/><line x1="427.1" y1="450" x2="427.1" y2="452"/><line x1="429.9" y1="450" x2="429.9" y2="452"/></g><path d="M26.5,414.8V420.9M33.5,412.6V424.1M38.5,414.8V420.9M47.5,414.4V422.3M52.5,415.1V421.2M58.5,414.8V420.9M63.5,413.3V423.0M66.5,413.7V421.6M70.5,414.8V422.0M74.5,410.8V424.5M77.5,413.7V422.7M81.5,412.2V424.1M84.5,411.9V423.0M87.5,413.7V423.4M90.5,413.3V422.3M267.5,408.6V426.6M270.5,411.5V425.2M274.5,410.1V428.1M278.5,409.0V428.8M282.5,401.4V434.2M284.5,407.9V428.8M286.5,406.8V427.4M288.5,409.4V430.6M291.5,405.0V428.8M293.5,408.6V431.0M296.5,397.8V439.6M298.5,407.2V430.2M300.5,403.2V432.4M303.5,409.4V428.1M306.5,408.3V425.9M309.5,410.1V426.6M313.5,410.8V427.4M317.5,407.2V428.8M318.5,408.3V429.2M321.5,413.0V422.3M328.5,414.8V420.9M336.5,413.3V421.6M340.5,414.8V421.2M345.5,413.7V421.6M350.5,414.8V422.0M354.5,414.4V421.2M361.5,408.6V428.8M362.5,405.0V434.6M364.5,407.2V429.5M366.5,410.1V430.2M367.5,408.6V425.2M370.5,410.8V428.1M372.5,408.6V425.9M376.5,411.5V425.2M380.5,411.9V425.9M385.5,411.2V424.5M390.5,411.5V425.2M394.5,410.8V426.6M397.5,410.1V425.2M399.5,405.0V428.8M402.5,403.6V434.6M404.5,408.6V428.8M407.5,401.4V432.4M409.5,407.9V427.4M410.5,406.8V428.1M413.5,410.8V425.9M417.5,412.2V424.5M421.5,413.0V423.8M426.5,413.3V423.0M430.5,411.9V423.4M267.5,411.5V424.2M268.5,410.8V425.0M271.5,413.2V427.4M272.5,408.9V422.7M273.5,408.8V424.4M276.5,411.7V427.2M278.5,410.5V426.7M279.5,410.4V426.9M281.5,410.2V425.8M283.5,411.2V429.5M286.5,405.4V429.8M287.5,409.2V429.0M290.5,406.4V428.7M291.5,407.8V429.9M295.5,409.8V429.4M296.5,410.2V428.0M299.5,409.2V427.2M302.5,409.4V423.9M303.5,408.2V429.4M305.5,411.4V426.5M310.5,409.6V429.0M313.5,409.6V428.8M314.5,408.3V427.9M320.5,413.7V427.0M322.5,413.5V422.5M329.5,414.8V421.0M338.5,415.4V420.6M341.5,413.9V421.4M342.5,415.1V421.8M343.5,414.8V422.3M347.5,414.4V421.6M348.5,415.1V422.9M353.5,415.2V421.2M355.5,413.4V422.6M361.5,408.3V426.2M363.5,407.9V424.8M364.5,406.1V429.4M365.5,406.9V426.0M368.5,410.8V423.8M370.5,407.9V428.9M372.5,407.6V429.0M375.5,410.7V424.5M377.5,411.6V423.8M379.5,409.9V425.1M382.5,411.7V425.0M385.5,411.7V426.9M388.5,407.8V427.1M391.5,408.6V423.7M392.5,407.5V424.5M396.5,410.7V425.0M401.5,409.2V424.2M402.5,411.9V428.6M405.5,408.8V428.2M406.5,409.1V424.9M407.5,411.0V428.6M411.5,408.3V427.9M412.5,409.1V423.6M413.5,408.0V423.1M414.5,407.6V425.1M415.5,412.5V423.9M417.5,411.6V423.1M423.5,412.7V421.8M424.5,411.9V422.4M428.5,411.8V424.4M430.5,413.3V423.7M94.5,407.3V424.8M97.5,409.7V426.0M100.5,413.5V425.1M103.5,412.9V422.6M106.5,414.7V423.0M109.5,406.5V424.7M112.5,409.3V426.6M115.5,406.6V424.5M118.5,412.1V424.1M121.5,411.9V428.9M124.5,406.6V424.0M127.5,411.6V426.3M130.5,409.4V426.8M133.5,412.3V421.7M136.5,412.3V422.2M139.5,409.5V422.2M142.5,413.7V427.4M145.5,411.7V428.8M148.5,409.8V429.5M151.5,412.8V426.3M154.5,407.0V422.5M157.5,405.6V423.5M160.5,407.1V430.8M163.5,406.6V424.9M166.5,413.0V426.6M169.5,405.7V424.7M172.5,405.9V423.3M175.5,405.7V422.4M178.5,411.0V430.2M181.5,406.6V430.3M184.5,406.3V428.9M187.5,407.6V423.8M190.5,409.9V423.7M193.5,407.3V428.3M196.5,411.4V422.9M199.5,405.0V429.6M202.5,408.7V427.2M205.5,406.0V426.4M208.5,410.1V425.4M211.5,411.4V422.5M214.5,407.9V426.1M217.5,408.5V422.9M220.5,410.5V423.6M223.5,412.6V424.7M226.5,406.2V425.9M229.5,410.1V427.8M232.5,411.6V422.4M235.5,408.9V426.8M238.5,407.8V426.3M241.5,407.5V428.9M244.5,411.7V426.6M247.5,409.6V424.1M250.5,410.3V427.0M253.5,405.9V430.2M256.5,411.7V427.6M259.5,413.9V422.3M262.5,409.8V429.5M265.5,413.0V428.5" stroke="#e8e8ff" stroke-width="1" fill="none" opacity="0.0"/><polygon points="18,417.0 19,417.0 20,417.0 21,417.0 22,417.0 23,416.8 24,417.0 25,416.9 26,417.0 27,417.0 28,417.0 29,417.0 30,417.0 31,417.0 32,417.0 33,417.0 34,416.7 35,417.0 36,417.0 37,417.0 38,417.0 39,417.0 40,417.0 41,417.0 42,417.0 43,417.0 44,417.0 45,417.0 46,417.0 47,417.0 48,417.0 49,417.0 50,417.0 51,417.0 52,417.0 53,417.0 54,417.0 55,417.0 56,417.0 57,417.0 58,417.0 59,417.0 60,417.0 61,417.0 62,416.6 63,417.0 64,417.0 65,417.0 66,416.8 67,416.9 68,417.0 69,416.8 70,416.7 71,417.0 72,417.0 73,417.0 74,417.0 75,417.0 76,417.0 77,416.9 78,417.0 79,417.0 80,417.0 81,416.9 82,416.9 83,417.0 84,417.0 85,416.9 86,416.9 87,417.0 88,416.5 89,417.0 90,416.9 91,416.9 92,417.0 93,417.0 94,416.7 95,417.0 96,416.5 97,416.8 98,416.9 99,416.6 100,417.0 101,416.4 102,416.5 103,416.6 104,416.4 105,415.5 106,416.7 107,416.5 108,416.5 109,416.2 110,416.5 111,416.2 112,415.7 113,416.2 114,416.4 115,416.0 116,416.2 117,416.2 118,416.5 119,414.4 120,414.8 121,415.4 122,416.0 123,415.5 124,416.6 125,415.7 126,415.3 127,415.8 128,416.1 129,415.2 130,415.7 131,416.3 132,415.9 133,416.1 134,416.3 135,415.6 136,414.6 137,416.0 138,415.5 139,415.7 140,415.5 141,415.7 142,416.3 143,416.4 144,414.4 145,414.0 146,416.1 147,414.2 148,415.6 149,414.0 150,416.0 151,415.7 152,415.3 153,414.1 154,413.9 155,414.6 156,414.7 157,415.8 158,414.4 159,416.3 160,415.3 161,415.6 162,416.2 163,413.8 164,415.9 165,415.3 166,416.1 167,414.1 168,415.1 169,413.8 170,415.6 171,415.5 172,415.5 173,413.8 174,416.2 175,413.4 176,416.0 177,415.7 178,415.8 179,415.2 180,416.1 181,415.7 182,415.9 183,415.4 184,415.1 185,415.1 186,415.9 187,416.2 188,415.1 189,415.3 190,416.1 191,415.6 192,416.0 193,414.6 194,415.8 195,416.0 196,415.4 197,415.4 198,416.1 199,414.4 200,414.7 201,415.9 202,415.1 203,413.5 204,415.5 205,415.9 206,415.7 207,414.7 208,415.0 209,413.8 210,415.5 211,414.4 212,414.6 213,415.1 214,414.7 215,415.2 216,415.5 217,415.7 218,415.5 219,414.7 220,412.8 221,415.1 222,415.9 223,414.3 224,415.0 225,414.1 226,415.5 227,414.5 228,416.2 229,414.1 230,416.0 231,414.9 232,415.9 233,415.8 234,415.5 235,415.0 236,414.9 237,416.0 238,415.6 239,415.7 240,414.9 241,414.6 242,415.9 243,415.5 244,415.0 245,416.1 246,415.6 247,414.9 248,415.4 249,415.7 250,414.3 251,416.2 252,414.8 253,415.0 254,415.8 255,413.8 256,414.8 257,415.3 258,415.9 259,415.5 260,414.7 261,415.7 262,415.5 263,415.2 264,415.7 265,416.1 266,414.6 267,415.8 268,415.7 269,415.0 270,415.5 271,415.0 272,415.7 273,415.0 274,414.0 275,415.8 276,412.7 277,413.1 278,414.9 279,414.1 280,414.4 281,413.8 282,414.3 283,414.2 284,414.4 285,415.3 286,413.7 287,415.3 288,414.2 289,412.0 290,414.0 291,412.5 292,415.2 293,412.1 294,412.5 295,414.6 296,413.9 297,414.1 298,412.0 299,414.4 300,412.5 301,414.7 302,412.7 303,414.3 304,415.8 305,414.9 306,415.0 307,414.6 308,415.4 309,415.5 310,416.0 311,416.0 312,412.9 313,416.0 314,414.9 315,414.4 316,415.8 317,415.4 318,415.6 319,415.6 320,416.5 321,416.0 322,416.3 323,416.7 324,416.9 325,416.6 326,417.0 327,416.9 328,417.0 329,416.7 330,416.8 331,416.9 332,416.9 333,416.6 334,416.6 335,417.0 336,416.4 337,416.3 338,417.0 339,417.0 340,416.3 341,416.4 342,417.0 343,416.8 344,416.8 345,417.0 346,416.6 347,417.0 348,417.0 349,416.3 350,416.3 351,416.7 352,416.6 353,416.3 354,415.9 355,417.0 356,416.8 357,416.0 358,415.1 359,414.7 360,415.3 361,414.5 362,414.3 363,415.0 364,415.1 365,415.5 366,415.3 367,414.9 368,415.0 369,416.0 370,414.8 371,413.2 372,415.5 373,414.7 374,414.7 375,415.3 376,412.8 377,415.8 378,416.0 379,415.9 380,415.6 381,415.9 382,415.2 383,415.3 384,413.0 385,414.7 386,416.1 387,415.3 388,414.0 389,416.1 390,414.6 391,415.5 392,413.0 393,414.7 394,415.3 395,415.9 396,416.0 397,413.8 398,414.6 399,415.7 400,415.4 401,414.6 402,413.7 403,414.9 404,415.6 405,414.6 406,415.6 407,415.9 408,415.4 409,415.1 410,415.5 411,415.1 412,415.9 413,415.2 414,414.2 415,415.6 416,415.1 417,416.2 418,415.9 419,416.1 420,416.3 421,415.2 422,415.9 423,416.7 424,416.6 425,416.1 426,416.5 427,416.5 428,416.4 429,415.1 430,415.6 431,416.0 432,414.4 432,420.6 431,420.0 430,420.5 429,419.9 428,420.0 427,419.7 426,420.0 425,419.9 424,420.1 423,421.3 422,419.4 421,420.1 420,419.7 419,419.7 418,420.3 417,419.6 416,420.0 415,421.8 414,419.9 413,421.7 412,421.6 411,420.5 410,420.6 409,422.3 408,420.7 407,422.1 406,421.2 405,421.1 404,420.8 403,420.5 402,421.4 401,421.5 400,420.8 399,422.2 398,420.7 397,421.2 396,422.2 395,420.4 394,420.3 393,421.2 392,421.9 391,420.2 390,421.1 389,420.9 388,422.9 387,422.2 386,421.9 385,420.2 384,421.3 383,422.1 382,420.4 381,420.7 380,420.3 379,420.3 378,421.0 377,420.0 376,422.1 375,420.5 374,423.3 373,420.7 372,422.5 371,421.0 370,420.9 369,420.1 368,422.3 367,420.6 366,423.4 365,423.4 364,421.2 363,423.6 362,421.9 361,422.7 360,422.0 359,420.7 358,420.1 357,420.4 356,419.5 355,419.5 354,419.5 353,419.4 352,419.3 351,419.0 350,419.1 349,419.3 348,419.1 347,419.7 346,419.0 345,419.0 344,419.4 343,419.0 342,419.0 341,419.0 340,419.0 339,419.2 338,419.1 337,420.0 336,419.0 335,419.0 334,420.0 333,419.0 332,419.0 331,419.0 330,419.6 329,419.2 328,419.2 327,419.0 326,419.4 325,419.0 324,419.5 323,419.9 322,420.6 321,420.9 320,419.9 319,420.6 318,420.6 317,420.9 316,421.6 315,420.8 314,420.2 313,421.0 312,422.2 311,420.4 310,421.9 309,423.6 308,420.0 307,421.2 306,420.6 305,420.1 304,420.9 303,423.4 302,420.3 301,421.2 300,422.1 299,421.5 298,421.0 297,420.9 296,421.7 295,421.6 294,421.6 293,424.0 292,421.3 291,421.8 290,421.9 289,421.6 288,421.8 287,420.6 286,421.9 285,424.6 284,421.4 283,420.9 282,421.2 281,423.1 280,422.1 279,421.3 278,423.1 277,421.9 276,422.4 275,421.9 274,420.8 273,420.3 272,419.8 271,419.9 270,421.9 269,420.7 268,419.7 267,420.5 266,419.5 265,420.1 264,420.3 263,421.0 262,421.8 261,420.0 260,419.9 259,421.3 258,420.0 257,420.3 256,422.0 255,421.8 254,421.6 253,420.3 252,421.8 251,419.7 250,419.8 249,420.3 248,422.0 247,420.9 246,421.2 245,421.4 244,420.8 243,421.0 242,420.0 241,420.7 240,420.6 239,419.9 238,420.7 237,423.1 236,420.0 235,419.9 234,423.0 233,421.1 232,420.5 231,420.7 230,420.7 229,421.7 228,420.9 227,422.9 226,420.9 225,420.7 224,421.3 223,420.9 222,420.5 221,420.4 220,420.1 219,421.1 218,420.6 217,420.3 216,420.4 215,421.4 214,420.4 213,420.5 212,420.7 211,420.7 210,421.7 209,420.4 208,420.7 207,422.3 206,420.1 205,420.6 204,421.1 203,420.2 202,421.0 201,420.0 200,420.3 199,422.4 198,420.6 197,420.7 196,421.7 195,421.8 194,420.7 193,421.0 192,421.2 191,420.8 190,420.3 189,420.5 188,421.9 187,421.0 186,421.4 185,419.8 184,422.8 183,419.8 182,420.3 181,420.8 180,421.7 179,421.3 178,420.7 177,420.8 176,420.8 175,420.3 174,420.2 173,420.9 172,420.2 171,421.8 170,420.3 169,420.6 168,419.8 167,420.8 166,420.0 165,420.2 164,421.6 163,422.5 162,419.9 161,420.2 160,420.4 159,419.8 158,419.8 157,420.1 156,420.2 155,419.8 154,421.4 153,421.2 152,420.2 151,421.4 150,420.6 149,420.5 148,422.1 147,421.2 146,420.4 145,420.9 144,420.6 143,419.9 142,419.7 141,419.8 140,420.9 139,420.4 138,421.5 137,420.3 136,420.4 135,420.4 134,419.6 133,419.7 132,419.4 131,419.7 130,419.7 129,421.5 128,420.4 127,421.5 126,419.6 125,421.3 124,419.4 123,421.2 122,420.8 121,419.9 120,420.3 119,421.0 118,419.4 117,419.3 116,419.7 115,420.8 114,419.9 113,420.8 112,419.7 111,420.7 110,420.2 109,420.1 108,419.7 107,419.5 106,419.5 105,420.0 104,419.4 103,419.7 102,419.0 101,419.0 100,419.3 99,419.4 98,419.2 97,419.6 96,419.8 95,420.2 94,419.6 93,419.0 92,419.1 91,419.0 90,419.4 89,419.2 88,419.1 87,419.0 86,419.2 85,419.6 84,419.0 83,419.1 82,419.4 81,419.4 80,419.0 79,419.0 78,419.0 77,419.0 76,419.0 75,419.0 74,419.0 73,419.0 72,419.2 71,419.0 70,419.4 69,419.0 68,419.0 67,419.0 66,419.0 65,419.2 64,419.0 63,419.0 62,419.0 61,419.0 60,419.0 59,419.0 58,419.0 57,419.3 56,419.0 55,419.0 54,419.0 53,419.1 52,419.0 51,419.2 50,419.0 49,419.0 48,419.1 47,419.0 46,419.3 45,419.0 44,419.0 43,419.2 42,419.0 41,419.0 40,419.0 39,419.2 38,419.0 37,419.1 36,419.0 35,419.0 34,419.0 33,419.4 32,419.1 31,419.0 30,419.0 29,419.0 28,419.0 27,419.0 26,419.0 25,419.0 24,419.0 23,419.0 22,419.0 21,419.0 20,419.0 19,419.0 18,419.0" fill="#fff"/><polygon points="18,438.5 19,438.5 20,438.5 21,438.5 22,438.5 23,438.5 24,438.5 25,438.5 26,438.5 27,438.5 28,438.5 29,438.5 30,438.5 31,438.4 32,438.5 33,438.5 34,438.3 35,438.1 36,438.5 37,438.5 38,438.5 39,438.5 40,438.4 41,438.3 42,438.4 43,438.4 44,438.5 45,438.5 46,438.5 47,438.5 48,438.5 49,438.5 50,438.5 51,438.5 52,438.5 53,438.5 54,438.5 55,438.5 56,438.5 57,438.5 58,438.5 59,438.5 60,438.5 61,438.5 62,438.5 63,438.5 64,438.1 65,438.5 66,438.5 67,438.5 68,438.5 69,438.5 70,438.5 71,438.5 72,438.5 73,438.5 74,438.5 75,438.5 76,438.3 77,438.3 78,438.5 79,438.5 80,438.5 81,438.5 82,438.5 83,438.2 84,437.7 85,438.4 86,438.5 87,438.5 88,437.9 89,437.8 90,438.3 91,437.8 92,438.2 93,438.4 94,438.2 95,437.9 96,438.5 97,438.2 98,438.2 99,438.5 100,438.5 101,438.5 102,438.1 103,437.8 104,438.2 105,437.7 106,437.9 107,437.9 108,437.3 109,438.2 110,437.8 111,436.5 112,437.9 113,437.9 114,437.9 115,438.0 116,437.2 117,437.7 118,437.1 119,437.4 120,437.2 121,437.6 122,437.4 123,437.5 124,437.3 125,437.2 126,437.1 127,437.8 128,435.5 129,437.0 130,436.3 131,436.2 132,437.1 133,437.8 134,435.5 135,437.6 136,436.1 137,436.9 138,437.4 139,437.0 140,437.3 141,436.4 142,436.1 143,436.9 144,436.9 145,437.7 146,437.5 147,437.0 148,437.2 149,436.3 150,437.0 151,435.1 152,436.3 153,437.9 154,436.9 155,437.0 156,436.9 157,437.8 158,437.1 159,435.7 160,437.3 161,437.4 162,437.2 163,437.1 164,436.4 165,435.7 166,437.5 167,436.9 168,437.3 169,437.0 170,437.6 171,437.7 172,437.6 173,437.3 174,437.6 175,436.3 176,437.6 177,436.4 178,437.7 179,437.1 180,437.0 181,437.1 182,436.5 183,437.1 184,436.8 185,437.2 186,435.1 187,437.3 188,436.3 189,437.4 190,437.5 191,436.5 192,436.7 193,435.2 194,436.5 195,437.4 196,435.8 197,436.5 198,436.0 199,435.4 200,436.6 201,437.3 202,435.8 203,435.7 204,436.9 205,437.1 206,435.0 207,437.1 208,436.5 209,436.7 210,437.6 211,434.6 212,436.5 213,435.6 214,435.3 215,437.3 216,437.3 217,436.8 218,436.9 219,437.1 220,436.9 221,436.8 222,437.4 223,437.1 224,436.5 225,436.7 226,436.7 227,437.0 228,436.6 229,437.4 230,436.9 231,437.4 232,436.7 233,437.3 234,436.7 235,435.3 236,436.7 237,435.5 238,437.0 239,437.3 240,436.6 241,437.2 242,436.5 243,436.6 244,435.5 245,436.8 246,436.9 247,436.9 248,435.8 249,436.7 250,436.7 251,437.2 252,437.1 253,435.3 254,437.6 255,436.9 256,436.8 257,437.3 258,437.3 259,437.0 260,437.5 261,436.9 262,436.6 263,437.4 264,437.9 265,437.3 266,437.0 267,437.3 268,437.2 269,436.2 270,437.6 271,437.6 272,436.4 273,437.6 274,437.4 275,437.2 276,436.6 277,435.2 278,435.4 279,435.6 280,435.1 281,436.0 282,436.0 283,434.5 284,433.9 285,433.9 286,436.8 287,436.6 288,435.4 289,436.0 290,434.7 291,436.4 292,434.9 293,436.1 294,436.1 295,435.8 296,434.0 297,436.3 298,435.8 299,435.6 300,436.2 301,435.7 302,437.1 303,434.2 304,436.9 305,435.1 306,436.2 307,436.3 308,436.9 309,437.5 310,437.5 311,436.2 312,436.9 313,435.1 314,436.4 315,436.7 316,436.8 317,436.9 318,437.0 319,437.5 320,437.3 321,438.1 322,438.2 323,438.1 324,437.6 325,437.3 326,438.5 327,438.0 328,438.0 329,438.5 330,438.4 331,438.3 332,438.5 333,437.9 334,438.5 335,438.3 336,438.5 337,438.1 338,437.8 339,437.3 340,438.5 341,438.2 342,438.2 343,438.5 344,438.4 345,438.2 346,437.8 347,438.0 348,438.4 349,438.1 350,438.5 351,438.1 352,438.5 353,438.1 354,438.1 355,438.2 356,438.5 357,438.1 358,435.4 359,436.1 360,435.0 361,434.7 362,436.6 363,437.1 364,435.7 365,437.1 366,435.8 367,436.9 368,436.8 369,436.1 370,436.3 371,437.2 372,437.2 373,436.4 374,435.6 375,435.7 376,437.4 377,435.4 378,435.1 379,436.7 380,434.7 381,437.3 382,436.6 383,435.9 384,436.9 385,437.4 386,436.5 387,437.3 388,436.9 389,437.2 390,435.6 391,436.6 392,437.3 393,437.4 394,435.9 395,436.3 396,436.5 397,435.4 398,436.8 399,435.9 400,436.2 401,434.8 402,435.6 403,436.3 404,435.5 405,436.9 406,437.3 407,436.0 408,436.2 409,437.3 410,435.1 411,436.9 412,435.9 413,435.5 414,435.9 415,437.4 416,437.6 417,437.7 418,438.1 419,436.4 420,435.9 421,438.0 422,438.1 423,436.5 424,437.1 425,436.9 426,437.5 427,437.9 428,437.4 429,437.8 430,437.2 431,435.7 432,438.0 432,442.5 431,442.2 430,441.3 429,441.1 428,441.7 427,441.3 426,441.5 425,441.7 424,441.2 423,441.6 422,440.9 421,442.8 420,441.5 419,441.7 418,441.1 417,441.7 416,443.1 415,442.5 414,442.7 413,441.8 412,442.2 411,441.8 410,442.6 409,441.8 408,441.6 407,442.4 406,444.4 405,442.1 404,443.6 403,441.9 402,442.5 401,441.7 400,442.9 399,441.8 398,443.9 397,442.2 396,441.8 395,442.8 394,442.7 393,442.3 392,442.0 391,441.9 390,444.1 389,443.1 388,444.1 387,442.4 386,441.6 385,444.4 384,442.6 383,442.6 382,442.6 381,441.7 380,444.2 379,441.6 378,441.9 377,444.2 376,441.8 375,442.3 374,442.8 373,442.2 372,442.8 371,442.2 370,442.6 369,442.0 368,443.6 367,443.1 366,442.0 365,442.5 364,443.5 363,443.7 362,442.4 361,443.2 360,441.9 359,445.1 358,441.4 357,440.9 356,441.2 355,440.6 354,440.9 353,441.3 352,440.9 351,440.8 350,440.7 349,440.5 348,440.5 347,441.4 346,440.8 345,440.5 344,440.6 343,440.7 342,440.7 341,440.5 340,440.7 339,440.9 338,440.6 337,440.6 336,441.0 335,440.5 334,440.5 333,440.5 332,440.5 331,440.7 330,440.5 329,441.6 328,440.5 327,440.7 326,441.1 325,440.5 324,441.6 323,441.0 322,441.9 321,441.4 320,441.8 319,441.6 318,441.2 317,442.9 316,441.6 315,442.1 314,442.7 313,441.6 312,443.4 311,442.8 310,441.5 309,442.6 308,445.2 307,442.5 306,442.3 305,441.8 304,442.2 303,442.3 302,443.0 301,443.2 300,441.8 299,445.4 298,446.1 297,444.5 296,446.2 295,443.4 294,446.1 293,445.9 292,442.8 291,446.4 290,443.2 289,443.3 288,445.4 287,444.3 286,446.6 285,443.8 284,443.1 283,443.5 282,443.7 281,442.3 280,443.1 279,443.4 278,442.1 277,442.6 276,441.9 275,442.2 274,442.9 273,443.7 272,441.5 271,441.6 270,441.6 269,441.3 268,442.7 267,441.3 266,441.8 265,441.5 264,441.6 263,442.8 262,441.1 261,443.3 260,441.1 259,441.1 258,443.0 257,442.1 256,442.2 255,441.9 254,442.1 253,442.0 252,441.5 251,441.5 250,443.6 249,441.6 248,441.5 247,441.9 246,442.3 245,442.4 244,443.2 243,443.5 242,441.6 241,441.8 240,443.2 239,443.8 238,441.5 237,442.2 236,443.4 235,443.6 234,441.4 233,442.1 232,443.6 231,442.6 230,441.9 229,442.1 228,442.3 227,442.5 226,444.7 225,442.2 224,442.2 223,441.5 222,442.1 221,442.6 220,441.5 219,442.0 218,441.7 217,443.2 216,441.9 215,444.7 214,441.4 213,441.6 212,444.1 211,444.4 210,442.3 209,442.0 208,441.9 207,442.9 206,441.5 205,444.0 204,441.4 203,443.6 202,443.4 201,442.7 200,443.6 199,442.4 198,441.6 197,441.4 196,442.5 195,442.3 194,442.2 193,442.6 192,443.6 191,442.4 190,442.2 189,442.1 188,441.9 187,442.3 186,441.9 185,441.5 184,442.4 183,441.7 182,442.3 181,441.5 180,441.5 179,443.3 178,441.6 177,442.3 176,441.2 175,441.5 174,441.5 173,441.3 172,443.0 171,443.6 170,441.4 169,442.3 168,442.4 167,442.1 166,443.6 165,443.0 164,441.5 163,443.1 162,442.5 161,441.3 160,442.2 159,442.8 158,441.2 157,441.2 156,443.2 155,441.7 154,442.7 153,442.6 152,442.9 151,443.4 150,441.9 149,442.0 148,443.5 147,441.9 146,442.0 145,441.3 144,441.9 143,441.2 142,441.7 141,442.5 140,442.2 139,441.4 138,441.9 137,442.0 136,443.0 135,441.8 134,442.8 133,442.5 132,441.0 131,441.1 130,442.3 129,441.7 128,441.4 127,441.8 126,442.0 125,441.0 124,441.0 123,441.8 122,442.8 121,442.1 120,441.7 119,441.6 118,441.7 117,441.3 116,441.0 115,441.0 114,442.4 113,441.2 112,441.0 111,441.3 110,442.1 109,441.7 108,440.8 107,441.8 106,440.9 105,441.5 104,440.9 103,440.5 102,441.1 101,441.6 100,440.5 99,441.6 98,440.9 97,440.7 96,440.6 95,440.5 94,440.5 93,441.2 92,440.8 91,440.5 90,440.5 89,441.3 88,440.5 87,441.0 86,440.7 85,441.2 84,440.5 83,440.5 82,440.5 81,441.1 80,440.5 79,440.5 78,440.5 77,440.5 76,440.9 75,440.5 74,440.8 73,440.5 72,440.5 71,440.5 70,440.5 69,440.8 68,440.5 67,440.9 66,440.5 65,440.5 64,440.5 63,440.5 62,440.5 61,440.5 60,440.5 59,440.5 58,440.5 57,440.5 56,440.5 55,440.5 54,440.5 53,440.5 52,440.7 51,440.5 50,440.7 49,440.5 48,440.5 47,440.5 46,440.5 45,440.5 44,440.8 43,440.5 42,440.5 41,440.5 40,440.5 39,440.5 38,440.5 37,440.5 36,440.5 35,440.5 34,440.5 33,440.5 32,440.5 31,440.5 30,440.5 29,440.6 28,440.5 27,440.5 26,440.5 25,440.5 24,440.5 23,440.5 22,440.5 21,440.5 20,440.5 19,440.5 18,440.5" fill="#ff1c1c"/><rect x="17" y="407" width="11" height="42.700" fill="url(#ovl)"/><g font-size="10.5" fill="#444" font-family="Liberation Sans,sans-serif" letter-spacing="0"><text x="19.1" y="462.2">0:00</text><text x="46.8" y="462.2">0:10</text><text x="74.4" y="462.2">0:20</text><text x="102.0" y="462.2">0:30</text><text x="129.7" y="462.2">0:40</text><text x="157.3" y="462.2">0:50</text><text x="185.0" y="462.2">1:00</text><text x="212.6" y="462.2">1:10</text><text x="240.3" y="462.2">1:20</text><text x="267.9" y="462.2">1:30</text><text x="295.6" y="462.2">1:40</text><text x="323.2" y="462.2">1:50</text><text x="350.9" y="462.2">2:00</text><text x="378.5" y="462.2">2:10</text><text x="406.2" y="462.2">2:20</text></g></svg>
<div class="t" style="left:5px;top:170.5px;font-size:8px;font-weight:bold;color:#333">L</div>
<svg style="left:2px;top:178.5px" width="13" height="13" viewBox="0 0 13 13"><rect x="0.5" y="0.5" width="12" height="12" rx="2" fill="#22bb22" stroke="#118811"/><polyline points="2.5,6 5.5,9.5 10.5,3" fill="none" stroke="#d8ffd8" stroke-width="2"/></svg>
<div class="t" style="left:4px;top:192.5px;font-size:13px;font-weight:bold;color:#222;text-decoration:underline">1</div>
<div class="t" style="left:5px;top:291.5px;font-size:8px;font-weight:bold;color:#333">R</div>
<svg style="left:2px;top:299.5px" width="13" height="13" viewBox="0 0 13 13"><rect x="0.5" y="0.5" width="12" height="12" rx="2" fill="#22bb22" stroke="#118811"/><polyline points="2.5,6 5.5,9.5 10.5,3" fill="none" stroke="#d8ffd8" stroke-width="2"/></svg>
<div class="t" style="left:4px;top:313.5px;font-size:13px;font-weight:bold;color:#222;text-decoration:underline">1</div>
<div class="a" style="left:1.2px;top:466px;width:430.8px;height:34px;background:#f0f0f0"></div>
<div class="a" style="left:63px;top:467px;width:2px;height:33px;background:linear-gradient(90deg,#d8d8d8 50%,#fff 50%)"></div>
<div class="a" style="left:170px;top:467px;width:2px;height:33px;background:linear-gradient(90deg,#d8d8d8 50%,#fff 50%)"></div>
<div class="a" style="left:0;top:483px;width:432px;height:2px;background:linear-gradient(#d8d8d8 50%,#fff 50%)"></div>
<div class="a" style="left:0;top:466px;width:432px;height:1px;background:#d8d8d8"></div>
<div class="t" style="left:12px;top:469px;font-size:10.5px;letter-spacing:-0.4px;color:#222;font-size:10.6px;letter-spacing:0">立体声</div>
<div class="t" style="left:15px;top:486px;font-size:10.5px;letter-spacing:-0.4px;color:#222;font-size:10.6px;letter-spacing:0">未修改</div>
<div class="t" style="left:97px;top:470px;font-size:10.5px;letter-spacing:-0.4px;color:#222;">4:14.067</div>
<div class="t" style="left:100px;top:487px;font-size:10.5px;letter-spacing:-0.4px;color:#222;">4:14.1</div>
<div class="t" style="left:237px;top:470px;font-size:10.5px;letter-spacing:-0.4px;color:#222;letter-spacing:-0.12px">0.000 到 4:14.067 (4:14.067)</div>
<div class="t" style="left:174px;top:487px;font-size:10.5px;letter-spacing:-0.4px;color:#222;">MP3 44100 Hz, 128 kbps, 立体声</div>
<svg style="left:54px;top:473px" width="7" height="5"><polygon points="0,4 6.500,4 3.250,0" fill="#111"/></svg>
<svg style="left:161px;top:473px" width="8" height="5"><polygon points="0.500,0 7,0 3.750,4" fill="#111"/></svg>
<svg style="left:161px;top:490px" width="8" height="5"><polygon points="0.500,0 7,0 3.750,4" fill="#111"/></svg>
<svg style="left:0;top:0" width="738" height="500" viewBox="0 0 738 500"><defs><linearGradient id="doc" x1="0" y1="0" x2="1" y2="1"><stop offset="0" stop-color="#fdfdfd"/><stop offset="1" stop-color="#dcdcdc"/></linearGradient><linearGradient id="fold" x1="0" y1="0" x2="1" y2="0"><stop offset="0" stop-color="#e8c870"/><stop offset="0.5" stop-color="#c8a040"/><stop offset="1" stop-color="#e0bc60"/></linearGradient><radialGradient id="sph" cx="0.4" cy="0.35" r="0.7"><stop offset="0" stop-color="#60b0ff"/><stop offset="0.5" stop-color="#1450f0"/><stop offset="1" stop-color="#0818c8"/></radialGradient><filter id="glow"><feGaussianBlur stdDeviation="0.7"/></filter></defs><g opacity="1"><path d="M19,50.5 h14.5 l6.5,6.5 v20.5 h-21 z" fill="#000" opacity="0.12"/><path d="M18,49 h14.5 l6.5,6.5 v20.5 h-21 z" fill="url(#doc)" stroke="#a8a8a8" stroke-width="1"/><path d="M32.5,49 v6.5 h6.5 z" fill="#f4f4f4" stroke="#a8a8a8" stroke-width="0.8"/></g><polygon points="55.5,68 62.5,68 59,72" fill="#111"/><path d="M75,51.500 l7.500,-2.200 v26.500 l-7.500,-2.300 z" fill="url(#fold)" stroke="#b08a30" stroke-width="0.6"/><path d="M84,51 h9 v24.500 h-9 z" fill="#d4ae50"/><path d="M82.500,52.500 h2.800 v22 h-2.800 z" fill="#f0f0f6"/><path d="M85.500,50.500 l7,-1.200 v26.500 l-7,-1.300 z" fill="url(#fold)" stroke="#b08a30" stroke-width="0.6"/><path d="M294.200,51.500 L277,62.500 L279,65.500 Z" fill="#a6a6a6"/><path d="M290,49.200 L280,66.500 L283.500,68 Z" fill="#8a8a8a"/><ellipse cx="273.300" cy="64.200" rx="3.900" ry="2.900" transform="rotate(30 273.300 64.200)" fill="#b8dcf4" stroke="#2c80d4" stroke-width="2.600"/><ellipse cx="280.300" cy="70.600" rx="2.900" ry="3.900" transform="rotate(28 280.300 70.600)" fill="#b8dcf4" stroke="#2c80d4" stroke-width="2.600"/><g opacity="1"><path d="M312.5,51.0 h11 l5,5 v15 h-16 z" fill="#000" opacity="0.12"/><path d="M311.5,49.5 h11 l5,5 v15 h-16 z" fill="url(#doc)" stroke="#a8a8a8" stroke-width="1"/><path d="M322.5,49.5 v5 h5 z" fill="#f4f4f4" stroke="#a8a8a8" stroke-width="0.8"/></g><g opacity="1"><path d="M318.5,56.5 h12 l5,5 v15.5 h-17 z" fill="#000" opacity="0.12"/><path d="M317.5,55 h12 l5,5 v15.5 h-17 z" fill="url(#doc)" stroke="#a8a8a8" stroke-width="1"/><path d="M329.5,55 v5 h5 z" fill="#f4f4f4" stroke="#a8a8a8" stroke-width="0.8"/></g><g opacity="0.38"><rect x="351.5" y="52" width="22" height="23" rx="1.500" fill="#ecdcb8"/><path d="M358.5,52 q0,-3 4,-3 q4,0 4,3 z" fill="#c8c8c8"/><path d="M356.5,55 h12 l5,5 v15.500 h-17 z" fill="#fcfcfc" stroke="#c0c0c0" stroke-width="0.8"/></g><g opacity="0.38"><rect x="392" y="52" width="22" height="23" rx="1.500" fill="#ecdcb8"/><path d="M399,52 q0,-3 4,-3 q4,0 4,3 z" fill="#c8c8c8"/><path d="M397,55 h12 l5,5 v15.500 h-17 z" fill="#fcfcfc" stroke="#c0c0c0" stroke-width="0.8"/></g><g opacity="0.75"><rect x="400" y="60.500" width="12" height="12" fill="#fafafa" stroke="#a4a4a4" stroke-width="1"/><rect x="400" y="60.500" width="12" height="2.600" fill="#a4a4a4"/></g><rect x="13.500" y="103.500" width="27" height="19" fill="#060606"/><g filter="url(#glow)"><circle cx="25.700" cy="113" r="5.800" fill="none" stroke="#f01818" stroke-width="2"/><line x1="21.500" y1="109" x2="30" y2="117" stroke="#f01818" stroke-width="2"/></g><circle cx="25.700" cy="113" r="5.800" fill="none" stroke="#e81818" stroke-width="1.600"/><line x1="21.700" y1="109.200" x2="29.800" y2="116.800" stroke="#e81818" stroke-width="1.600"/><path d="M54.2,101.3 L60.45,107.8 H56.7 V112.5 H51.7 V107.8 H47.95 Z" fill="#1a6cf0"/><path d="M54.2,126.5 L60.45,120.0 H56.7 V115 H51.7 V120.0 H47.95 Z" fill="#1a6cf0"/><path d="M68.6,113.2 L74.85,106.7 H71.1 V101.3 H66.1 V106.7 H62.349999999999994 Z" fill="#1a6cf0"/><path d="M68.6,114.8 L74.85,121.3 H71.1 V126.5 H66.1 V121.3 H62.349999999999994 Z" fill="#1a6cf0"/><circle cx="96.800" cy="110" r="10.400" fill="#0a16e0"/><line x1="90" y1="123" x2="105" y2="123" stroke="#909090" stroke-width="1.200"/><circle cx="89" cy="123" r="2.600" fill="#fff" stroke="#8c8c8c" stroke-width="1.200"/><polygon points="271.600,100 284,112.600 271.600,125 259.200,112.600" fill="#1464f0"/><rect x="263.400" y="104" width="16.400" height="16.500" fill="#0a1ce0" opacity="0.8"/><circle cx="271.600" cy="112.600" r="3.600" fill="#44acff"/><g stroke="#484848" stroke-width="1.200"><line x1="295" y1="103" x2="318" y2="103"/><line x1="295" y1="108.3" x2="318" y2="108.3"/><line x1="295" y1="113.6" x2="318" y2="113.6"/><line x1="295" y1="118.9" x2="318" y2="118.9"/><line x1="295" y1="124.2" x2="318" y2="124.2"/><line x1="295.600" y1="102.500" x2="295.600" y2="124.800" stroke-width="1.600"/></g><ellipse cx="304.300" cy="116.400" rx="4.900" ry="3.900" fill="#1038e0"/><rect x="307.800" y="102" width="1.700" height="14.500" fill="#1038e0"/><path d="M308.500,102 q1.500,3.500 6,5.500 l-0.800,2 q-3.500,-1.500 -5.200,-3 z" fill="#1038e0"/><path d="M340.500,101.8 L335.500,105.5" stroke="#44a4f0" stroke-width="3"/><polygon points="331.600,109 332,102.6 338,107.6" fill="#44a4f0"/><path d="M351.500,113.3 L343.500,104" stroke="#1430e4" stroke-width="4.200"/><polygon points="339.300,100.3 348.300,100.3 341,108.8" fill="#1464f0"/><path d="M340.500,124.8 L335.500,121.1" stroke="#44a4f0" stroke-width="3"/><polygon points="331.600,117.6 332,124.0 338,119.0" fill="#44a4f0"/><path d="M351.500,113.3 L343.500,122.6" stroke="#1430e4" stroke-width="4.200"/><polygon points="339.300,126.3 348.300,126.3 341,117.8" fill="#1464f0"/><path d="M328.800,111.300 h17 v4.100 h-17 z" fill="#0a14d8"/><polygon points="345,107.300 354.300,113.300 345,119.300" fill="#0a14d8"/><path d="M363.700,113 l9,-8.500 v4.500 h17 l-3,4 l3,4 h-17 v4.500 z" fill="#1a6cf0"/><circle cx="411.800" cy="113" r="13.500" fill="#40acf4"/><circle cx="411.800" cy="113" r="13" fill="none" stroke="#2c90e0" stroke-width="1"/><rect x="400" y="111.500" width="23.600" height="3" fill="#0a14d8"/><path d="M411.8,101 L417.3,106.5 H414.05 V110.5 H409.55 V106.5 H406.3 Z" fill="#1264e4"/><path d="M411.8,125 L417.3,119.5 H414.05 V115.5 H409.55 V119.5 H406.3 Z" fill="#1264e4"/></svg>
<div class="t" style="left:20.3px;top:80.500px;font-size:10.500px;color:#111">新建</div>
<div class="t" style="left:76.5px;top:80.500px;font-size:10.500px;color:#111">打开</div>
<div class="t" style="left:271.5px;top:80.500px;font-size:10.500px;color:#111">剪切</div>
<div class="t" style="left:312.5px;top:80.500px;font-size:10.500px;color:#111">复制</div>
<div class="t" style="left:352px;top:80.500px;font-size:10.500px;color:#a8a8a8;font-weight:400">粘贴</div>
<div class="t" style="left:393px;top:80.500px;font-size:10.500px;color:#a8a8a8;font-weight:400">粘新</div>
<div class="a" style="left:432px;top:20px;width:298px;height:19px;background:#66b3ea"></div>
<div class="a" style="left:431px;top:20px;width:1.5px;height:116px;background:#c4dcf0"></div>
<div class="a" style="left:432px;top:39px;width:298px;height:452px;background:#f0f0f0"></div>
<div class="a" style="left:729px;top:132px;width:9px;height:368px;background:#f8f8f8"></div>
<div class="a" style="left:432px;top:490px;width:306px;height:10px;background:#f6f6f6"></div>
<div class="a" style="left:730px;top:39px;width:1px;height:452px;background:#bcdcf2"></div>
<div class="a" style="left:736px;top:132px;width:2px;height:368px;background:#a4d0f2"></div>
<div class="a" style="left:0;top:498px;width:738px;height:2px;background:#a4d0f2"></div>
<div class="a" style="left:431px;top:136px;width:1.5px;height:355px;background:#c8c8c8"></div>
<svg style="left:431.5px;top:20px" width="24" height="20" viewBox="0 0 24 20"><polyline points="4.500,7.200 8,10.500 11.500,6.300 14.600,11 19,5.800" fill="none" stroke="#f0e428" stroke-width="2" stroke-linejoin="round"/><rect x="4" y="13.600" width="15" height="1.800" rx="0.900" fill="url(#ib)"/></svg>
<div class="t" style="left:455px;top:23px;font-size:9.6px;color:#8499ae;background:#abc4da;padding:1px 0 3px 0">控制器</div>
<svg style="left:640px;top:20px" width="88" height="19" viewBox="0 0 88 19"><g stroke="#4a86b8" stroke-width="1" fill="none"><line x1="3" y1="9.500" x2="12" y2="9.500"/><rect x="35.500" y="5.500" width="8.300" height="8.300"/><line x1="69.700" y1="5" x2="78.500" y2="13.800"/><line x1="78.500" y1="5" x2="69.700" y2="13.800"/></g></svg>
<svg style="left:0;top:0" width="738" height="500" viewBox="0 0 738 500"><defs><linearGradient id="sl" x1="0" x2="1"><stop offset="0" stop-color="#6c6c6c"/><stop offset="1" stop-color="#ececec"/></linearGradient><linearGradient id="bar" x1="0" x2="1"><stop offset="0" stop-color="#c8c8d0"/><stop offset="0.35" stop-color="#b4b4c0"/><stop offset="1" stop-color="#8c8c9c"/></linearGradient><linearGradient id="vu" gradientUnits="userSpaceOnUse" x1="566" x2="722"><stop offset="0" stop-color="#2ccc24"/><stop offset="0.15" stop-color="#3ed01c"/><stop offset="0.3" stop-color="#60c818"/><stop offset="1" stop-color="#c01010"/></linearGradient><linearGradient id="vud" gradientUnits="userSpaceOnUse" x1="566" x2="722"><stop offset="0" stop-color="#1c8c14"/><stop offset="0.2" stop-color="#347c12"/><stop offset="0.45" stop-color="#5c7410"/><stop offset="0.62" stop-color="#78700c"/><stop offset="0.8" stop-color="#8a4a0c"/><stop offset="1" stop-color="#8c1408"/></linearGradient></defs><polygon points="444,45 444,65 464,55" fill="#10e010"/><rect x="489" y="45.5" width="15.5" height="20" fill="#a4a4a8"/><polygon points="489,47 489,64.5 505,55.7" fill="#10e010"/><path d="M490.5,44.6 q-3.300,0 -3.300,3 v5 q0,3 -2.400,3.100 q2.400,0.100 2.400,3.100 v5 q0,3 3.300,3 M503.500,44.600 q3.300,0 3.300,3 v5 q0,3 2.400,3.100 q-2.400,0.100 -2.400,3.100 v5 q0,3 -3.300,3" fill="none" stroke="#1464f0" stroke-width="2.200"/><polygon points="529,46 529,64 546,55" fill="#10e010"/><rect x="539" y="45" width="1" height="22" fill="#c8c8c8"/><rect x="547.5" y="45" width="3.2" height="22" fill="#222"/><polygon points="434.600,85.600 449.500,79.200 449.500,92" fill="#1464f0"/><polygon points="447,85.600 461,79.200 461,92" fill="#1464f0"/><polygon points="466.300,79.200 466.300,92 480,85.600" fill="#1464f0"/><polygon points="478,79.200 478,92 492.700,85.600" fill="#1464f0"/><rect x="505.600" y="79" width="5.300" height="14" fill="#1464f0"/><rect x="514.600" y="79" width="5.300" height="14" fill="#1464f0"/><rect x="538.200" y="79.300" width="14.400" height="13.500" fill="#1464f0"/><path d="M441.5,104.5 h17 l6,6 v18 h-23 z" fill="#fafafa" stroke="#909090"/><path d="M458.5,104.5 v6 h6" fill="#e0e0e0" stroke="#909090"/><circle cx="453" cy="116.500" r="9" fill="#f00808"/><rect x="488.500" y="106.500" width="15.500" height="19.500" fill="#a4a4a8"/><circle cx="496" cy="116.300" r="8.900" fill="#f00808"/><path d="M490.500,104 q-3.300,0 -3.300,3 v6.300 q0,3 -2.400,3.100 q2.400,0.100 2.400,3.100 v6.300 q0,3 3.300,3 M502.500,104 q3.300,0 3.300,3 v6.300 q0,3 2.400,3.100 q-2.400,0.100 -2.400,3.100 v6.300 q0,3 -3.300,3" fill="none" stroke="#1464f0" stroke-width="2.200"/><circle cx="532" cy="117.200" r="5.400" fill="#0a0ad8"/><circle cx="532" cy="117.200" r="1.700" fill="#8cb0ff"/><rect x="539.700" y="111.300" width="12" height="12" fill="#0a18d8"/><polyline points="542.300,117.300 545,120.300 549.800,114" fill="none" stroke="#fff" stroke-width="1.600"/><rect x="565.5" y="41.7" width="163" height="14" fill="#f4f4f4" stroke="#c4c4c4"/><rect x="580" y="42.2" width="134" height="13" fill="url(#sl)"/><rect x="568" y="47.7" width="9" height="1.800" fill="#111"/><rect x="717" y="47.7" width="9" height="1.800" fill="#111"/><rect x="720.6" y="44.2" width="1.800" height="9" fill="#111"/><rect x="565.5" y="71.8" width="163" height="14" fill="#f4f4f4" stroke="#c4c4c4"/><rect x="580" y="72.3" width="134" height="13" fill="url(#sl)"/><rect x="568" y="77.8" width="9" height="1.800" fill="#111"/><rect x="717" y="77.8" width="9" height="1.800" fill="#111"/><rect x="720.6" y="74.3" width="1.800" height="9" fill="#111"/><rect x="565.5" y="102.7" width="163" height="14" fill="#f4f4f4" stroke="#c4c4c4"/><rect x="580" y="103.2" width="134" height="13" fill="url(#sl)"/><rect x="568" y="108.7" width="9" height="1.800" fill="#111"/><rect x="717" y="108.7" width="9" height="1.800" fill="#111"/><rect x="720.6" y="105.2" width="1.800" height="9" fill="#111"/><rect x="701" y="42.200" width="13.500" height="13" fill="#ececf0"/><path d="M702.500,46.500 h3 l5.800,-4.300 v13 l-5.800,-4.300 h-3 z" fill="#1060e8"/><rect x="640" y="72" width="14" height="13" fill="#f4f4f4"/><polygon points="648,73.500 648,83.500 654,78.500" fill="#e01010"/><polygon points="646,73.500 646,83.500 640.500,78.500" fill="#f0f0f0"/><rect x="604" y="103" width="13" height="13" fill="#f4f4f4"/><path d="M606.500,105 l8,8 M614.500,105 l-8,8" stroke="#1050e0" stroke-width="1.800"/><rect x="433" y="136" width="127" height="28" fill="#000"/><text x="437" y="158" font-size="21.2" fill="#20e428" font-family="Liberation Sans,sans-serif">00:00:31.2</text><polygon points="543,139 543,148 553,143.500" fill="#0c7c14"/><rect x="543" y="151" width="9.500" height="9" fill="#8c0c0c"/><rect x="566.5" y="136" width="155.5" height="26.5" fill="url(#vud)"/><path d="M566.5,136 H608 V149 H599 V162.5 H566.5 Z" fill="url(#vu)"/><rect x="665.500" y="136" width="1.600" height="13" fill="#e8e418"/><rect x="658.200" y="149" width="1.600" height="13.500" fill="#e8e418"/><rect x="722" y="136" width="1" height="26.500" fill="#e8c8c8"/><rect x="724.500" y="136" width="4" height="27" fill="#000"/><rect x="433" y="165" width="295.800" height="161.8" fill="#000"/><g stroke="#8c8c8c" stroke-width="1"><line x1="455" y1="179.7" x2="728" y2="179.7"/><line x1="455" y1="194.4" x2="728" y2="194.4"/><line x1="455" y1="209.1" x2="728" y2="209.1"/><line x1="455" y1="223.8" x2="728" y2="223.8"/><line x1="455" y1="238.5" x2="728" y2="238.5"/><line x1="455" y1="253.2" x2="728" y2="253.2"/><line x1="455" y1="267.9" x2="728" y2="267.9"/><line x1="455" y1="282.6" x2="728" y2="282.6"/><line x1="455" y1="297.3" x2="728" y2="297.3"/></g><line x1="454.500" y1="166" x2="454.500" y2="312" stroke="#d8d8d8" stroke-width="1.500" stroke-dasharray="1.500 1"/><line x1="454" y1="312.3" x2="728.8" y2="312.3" stroke="#9c9c9c" stroke-width="0.8"/><g font-size="10.200" letter-spacing="-0.35" fill="#d4d4d4" font-family="Liberation Sans,sans-serif"><text x="452" y="176.5" text-anchor="end">0</text><text x="452" y="205.7" text-anchor="end">-20</text><text x="452" y="234.9" text-anchor="end">-40</text><text x="452" y="264.1" text-anchor="end">-60</text><text x="452" y="293.3" text-anchor="end">-80</text><text x="452" y="322.5" text-anchor="end">-100</text><text x="467.5" y="323.3" text-anchor="middle">16</text><text x="492.2" y="323.3" text-anchor="middle">32</text><text x="516.9" y="323.3" text-anchor="middle">64</text><text x="541.7" y="323.3" text-anchor="middle">129</text><text x="566.4" y="323.3" text-anchor="middle">258</text><text x="591.1" y="323.3" text-anchor="middle">517</text><text x="615.8" y="323.3" text-anchor="middle">1k</text><text x="640.5" y="323.3" text-anchor="middle">2k</text><text x="665.3" y="323.3" text-anchor="middle">4k</text><text x="690.0" y="323.3" text-anchor="middle">8k</text><text x="714.7" y="323.3" text-anchor="middle">16k</text></g><rect x="456.0" y="265" width="23" height="47.0" fill="url(#bar)"/><rect x="480.7" y="282.5" width="23" height="29.5" fill="url(#bar)"/><rect x="505.4" y="234" width="23" height="78.0" fill="url(#bar)"/><rect x="530.2" y="235" width="23" height="77.0" fill="url(#bar)"/><rect x="554.9" y="236" width="23" height="76.0" fill="url(#bar)"/><rect x="579.6" y="226" width="23" height="86.0" fill="url(#bar)"/><rect x="604.3" y="238.5" width="23" height="73.5" fill="url(#bar)"/><rect x="629.0" y="244" width="23" height="68.0" fill="url(#bar)"/><rect x="653.8" y="261" width="23" height="51.0" fill="url(#bar)"/><rect x="678.5" y="268" width="23" height="44.0" fill="url(#bar)"/><rect x="703.2" y="280" width="23" height="32.0" fill="url(#bar)"/><g font-size="10.200" letter-spacing="-0.35" fill="#ee2424" font-family="Liberation Sans,sans-serif"><line x1="456.0" y1="256.9" x2="479.0" y2="256.9" stroke="#d41414" stroke-width="1.300"/><text x="467.5" y="254.4" text-anchor="middle">62</text><line x1="480.7" y1="270.2" x2="503.7" y2="270.2" stroke="#d41414" stroke-width="1.300"/><text x="492.2" y="267.7" text-anchor="middle">71</text><line x1="505.4" y1="230.5" x2="528.4" y2="230.5" stroke="#d41414" stroke-width="1.300"/><text x="516.9" y="228.0" text-anchor="middle">44</text><line x1="530.2" y1="234.9" x2="553.2" y2="234.9" stroke="#d41414" stroke-width="1.300"/><text x="541.7" y="232.4" text-anchor="middle">47</text><line x1="554.9" y1="226.1" x2="577.9" y2="226.1" stroke="#d41414" stroke-width="1.300"/><text x="566.4" y="223.6" text-anchor="middle">41</text><line x1="579.6" y1="201.1" x2="602.6" y2="201.1" stroke="#d41414" stroke-width="1.300"/><text x="591.1" y="198.6" text-anchor="middle">24</text><line x1="604.3" y1="204.0" x2="627.3" y2="204.0" stroke="#d41414" stroke-width="1.300"/><text x="615.8" y="201.5" text-anchor="middle">26</text><line x1="629.0" y1="221.7" x2="652.0" y2="221.7" stroke="#d41414" stroke-width="1.300"/><text x="640.5" y="219.2" text-anchor="middle">38</text><line x1="653.8" y1="234.9" x2="676.8" y2="234.9" stroke="#d41414" stroke-width="1.300"/><text x="665.3" y="232.4" text-anchor="middle">47</text><line x1="678.5" y1="243.7" x2="701.5" y2="243.7" stroke="#d41414" stroke-width="1.300"/><text x="690.0" y="241.2" text-anchor="middle">53</text><line x1="703.2" y1="251.1" x2="726.2" y2="251.1" stroke="#d41414" stroke-width="1.300"/><text x="714.7" y="248.6" text-anchor="middle">58</text></g><rect x="433" y="328.5" width="295.800" height="161.2" fill="#000"/><g stroke="#8c8c8c" stroke-width="1"><line x1="455" y1="343.2" x2="728" y2="343.2"/><line x1="455" y1="357.9" x2="728" y2="357.9"/><line x1="455" y1="372.6" x2="728" y2="372.6"/><line x1="455" y1="387.3" x2="728" y2="387.3"/><line x1="455" y1="402.0" x2="728" y2="402.0"/><line x1="455" y1="416.7" x2="728" y2="416.7"/><line x1="455" y1="431.4" x2="728" y2="431.4"/><line x1="455" y1="446.1" x2="728" y2="446.1"/><line x1="455" y1="460.8" x2="728" y2="460.8"/></g><line x1="454.500" y1="329.5" x2="454.500" y2="475.5" stroke="#d8d8d8" stroke-width="1.500" stroke-dasharray="1.500 1"/><line x1="454" y1="475.8" x2="728.8" y2="475.8" stroke="#9c9c9c" stroke-width="0.8"/><g font-size="10.200" letter-spacing="-0.35" fill="#d4d4d4" font-family="Liberation Sans,sans-serif"><text x="452" y="340.0" text-anchor="end">0</text><text x="452" y="369.2" text-anchor="end">-20</text><text x="452" y="398.4" text-anchor="end">-40</text><text x="452" y="427.6" text-anchor="end">-60</text><text x="452" y="456.8" text-anchor="end">-80</text><text x="452" y="486.0" text-anchor="end">-100</text><text x="467.5" y="486.8" text-anchor="middle">16</text><text x="492.2" y="486.8" text-anchor="middle">32</text><text x="516.9" y="486.8" text-anchor="middle">64</text><text x="541.7" y="486.8" text-anchor="middle">129</text><text x="566.4" y="486.8" text-anchor="middle">258</text><text x="591.1" y="486.8" text-anchor="middle">517</text><text x="615.8" y="486.8" text-anchor="middle">1k</text><text x="640.5" y="486.8" text-anchor="middle">2k</text><text x="665.3" y="486.8" text-anchor="middle">4k</text><text x="690.0" y="486.8" text-anchor="middle">8k</text><text x="714.7" y="486.8" text-anchor="middle">16k</text></g><rect x="456.0" y="427" width="23" height="48.5" fill="url(#bar)"/><rect x="480.7" y="444" width="23" height="31.5" fill="url(#bar)"/><rect x="505.4" y="405" width="23" height="70.5" fill="url(#bar)"/><rect x="530.2" y="400" width="23" height="75.5" fill="url(#bar)"/><rect x="554.9" y="401" width="23" height="74.5" fill="url(#bar)"/><rect x="579.6" y="400" width="23" height="75.5" fill="url(#bar)"/><rect x="604.3" y="392" width="23" height="83.5" fill="url(#bar)"/><rect x="629.0" y="408" width="23" height="67.5" fill="url(#bar)"/><rect x="653.8" y="423" width="23" height="52.5" fill="url(#bar)"/><rect x="678.5" y="431" width="23" height="44.5" fill="url(#bar)"/><rect x="703.2" y="443.5" width="23" height="32.0" fill="url(#bar)"/><g font-size="10.200" letter-spacing="-0.35" fill="#ee2424" font-family="Liberation Sans,sans-serif"><line x1="456.0" y1="419.0" x2="479.0" y2="419.0" stroke="#d41414" stroke-width="1.300"/><text x="467.5" y="416.5" text-anchor="middle">61</text><line x1="480.7" y1="433.7" x2="503.7" y2="433.7" stroke="#d41414" stroke-width="1.300"/><text x="492.2" y="431.2" text-anchor="middle">71</text><line x1="505.4" y1="402.8" x2="528.4" y2="402.8" stroke="#d41414" stroke-width="1.300"/><text x="516.9" y="400.3" text-anchor="middle">50</text><line x1="530.2" y1="398.4" x2="553.2" y2="398.4" stroke="#d41414" stroke-width="1.300"/><text x="541.7" y="395.9" text-anchor="middle">47</text><line x1="554.9" y1="398.4" x2="577.9" y2="398.4" stroke="#d41414" stroke-width="1.300"/><text x="566.4" y="395.9" text-anchor="middle">47</text><line x1="579.6" y1="364.6" x2="602.6" y2="364.6" stroke="#d41414" stroke-width="1.300"/><text x="591.1" y="362.1" text-anchor="middle">24</text><line x1="604.3" y1="367.5" x2="627.3" y2="367.5" stroke="#d41414" stroke-width="1.300"/><text x="615.8" y="365.0" text-anchor="middle">26</text><line x1="629.0" y1="386.6" x2="652.0" y2="386.6" stroke="#d41414" stroke-width="1.300"/><text x="640.5" y="384.1" text-anchor="middle">39</text><line x1="653.8" y1="398.4" x2="676.8" y2="398.4" stroke="#d41414" stroke-width="1.300"/><text x="665.3" y="395.9" text-anchor="middle">47</text><line x1="678.5" y1="405.7" x2="701.5" y2="405.7" stroke="#d41414" stroke-width="1.300"/><text x="690.0" y="403.2" text-anchor="middle">52</text><line x1="703.2" y1="414.6" x2="726.2" y2="414.6" stroke="#d41414" stroke-width="1.300"/><text x="714.7" y="412.1" text-anchor="middle">58</text></g></svg>
<div class="t" style="left:565px;width:163px;text-align:center;top:58px;font-size:10.500px;color:#111">音量: 100%</div>
<div class="t" style="left:565px;width:163px;text-align:center;top:88px;font-size:10.500px;color:#111">平衡: 0%</div>
<div class="t" style="left:565px;width:163px;text-align:center;top:119px;font-size:10.500px;color:#111">速度: 1.00</div>
<div class="a" style="left:96px;top:48px;width:174px;height:421px;background:rgba(0,0,0,0.22);filter:blur(2px)"></div>
<div class="a" style="left:92.5px;top:44.5px;width:174.5px;height:422.5px;background:#f2f2f2;border:1px solid #a8a8a8"></div>
<div class="mi" style="top:48px">删改(<u>C</u>)...</div>
<div class="mi" style="top:68px">压缩器/扩展器(<u>W</u>)...</div>
<div class="mi" style="top:88px">多普勒(<u>D</u>)...</div>
<div class="mi" style="top:107px">动态(<u>Y</u>)...</div>
<div class="mi" style="top:127px">回声(<u>E</u>)...</div>
<div class="mi" style="top:147px">滤波器(<u>F</u>)</div>
<svg style="left:252px;top:150px" width="6" height="8"><polyline points="1,0.5 4.5,4 1,7.5" fill="none" stroke="#444" stroke-width="1.1"/></svg>
<div class="mi" style="top:167px">镶边器(<u>G</u>)...</div>
<div class="mi" style="top:186px">内插(<u>L</u>)</div>
<div class="mi" style="top:206px">倒转(<u>I</u>)</div>
<div class="mi" style="top:226px">机械化(<u>Z</u>)...</div>
<div class="mi" style="top:246px">偏移(<u>O</u>)...</div>
<div class="mi" style="top:265px">音高(<u>P</u>)...</div>
<div class="mi dis" style="top:285px">插件(<u>N</u>)</div>
<div class="mi" style="top:305px">混响(<u>V</u>)...</div>
<div class="mi" style="top:324px">反向(<u>R</u>)</div>
<div class="mi" style="top:344px">立体声(<u>S</u>)</div>
<svg style="left:252px;top:347px" width="6" height="8"><polyline points="1,0.5 4.5,4 1,7.5" fill="none" stroke="#444" stroke-width="1.1"/></svg>
<div class="mi" style="top:364px">时间(<u>T</u>)...</div>
<div class="mi" style="top:384px">旁白(<u>X</u>)...</div>
<div class="mi" style="top:403px">音量(<u>U</u>)</div>
<svg style="left:252px;top:406px" width="6" height="8"><polyline points="1,0.5 4.5,4 1,7.5" fill="none" stroke="#444" stroke-width="1.1"/></svg>
<div class="mi" style="top:429px">回放速率(<u>A</u>)...</div>
<div class="mi" style="top:449px">重新采样(<u>M</u>)...</div>
<div class="a" style="left:120px;top:423px;width:144px;height:1px;background:#d4d4d4"></div>
<svg style="left:0;top:0" width="738" height="500" viewBox="0 0 738 500"><rect x="97" y="50.500" width="13.500" height="9" fill="#080808"/><circle cx="103.500" cy="55" r="2.700" fill="none" stroke="#c41414" stroke-width="1.100"/><line x1="101.800" y1="53.300" x2="105.200" y2="56.700" stroke="#c41414" stroke-width="0.9"/><path d="M100.2,69 L103.2,72.2 H101.4 V74.3 H99.0 V72.2 H97.2 Z" fill="#1a6cf0"/><path d="M100.2,81.5 L103.2,78.3 H101.4 V76 H99.0 V78.3 H97.2 Z" fill="#1a6cf0"/><path d="M107.3,74.8 L110.3,71.6 H108.5 V69 H106.1 V71.6 H104.3 Z" fill="#1a6cf0"/><path d="M107.3,75.6 L110.3,78.8 H108.5 V81.5 H106.1 V78.8 H104.3 Z" fill="#1a6cf0"/><circle cx="103.800" cy="93" r="5.200" fill="url(#sph)"/><path d="M99,100.500 h10" stroke="#8c8c8c" stroke-width="0.9"/><circle cx="99.500" cy="100.500" r="1.300" fill="#f4f4f4" stroke="#8c8c8c" stroke-width="0.8"/><circle cx="108.500" cy="100.500" r="1.300" fill="#f4f4f4" stroke="#8c8c8c" stroke-width="0.8"/><path d="M97.500,108.500 l2.500,3.500 l2.500,-3.500 M100,112 v3.500" stroke="#3c3c3c" stroke-width="1.500" fill="none"/><path d="M104.500,115 l5,5.500 M109.500,115 l-5,5.500" stroke="#3c3c3c" stroke-width="1.500" fill="none"/><path d="M99,119.500 L108,110.500" stroke="#a8a8a0" stroke-width="1.200"/><circle cx="99" cy="119.500" r="1.600" fill="#e8e8e0" stroke="#9c9c94" stroke-width="0.8"/><circle cx="108" cy="110.500" r="1.600" fill="#e8e8e0" stroke="#9c9c94" stroke-width="0.8"/><path d="M96.800,132.900 h5 v-2.700 l4.600,4 l-4.600,4 v-2.700 h-5 z" fill="#0a14d8"/><path d="M104.300,128.800 l4.600,5.400 l-4.600,5.400" fill="none" stroke="#2c7cf0" stroke-width="2.300"/><path d="M97.800,178.500 C98.500,167 103,168 104,174 S109,182 110.300,170.500" fill="none" stroke="#2040b4" stroke-width="2.800" stroke-linecap="round"/><path d="M97.800,178.500 C98.500,167 103,168 104,174 S109,182 110.300,170.500" fill="none" stroke="#6cacf0" stroke-width="1"/><path d="M99,173 q3,4 5,1 q2,-3 5,0" fill="none" stroke="#3470d8" stroke-width="1.600"/><path d="M98.500,197.500 L103.500,193.500 L108.500,189.500" stroke="#9cacac" stroke-width="1" fill="none"/><path d="M98.500,197.500 H108.500 V189.500" stroke="#c0c8c8" stroke-width="0.8" fill="none"/><circle cx="98.500" cy="197.500" r="1.700" fill="#f0f0f0" stroke="#8c9c9c" stroke-width="0.9"/><circle cx="108.500" cy="189.500" r="1.700" fill="#f0f0f0" stroke="#8c9c9c" stroke-width="0.9"/><rect x="102" y="192" width="3" height="3" fill="#70b0c0"/><path d="M101,215 v-3 q0,-3.500 3,-3.500 q3,0 3,3.500 v6" fill="none" stroke="#1a6cf0" stroke-width="2.200"/><polygon points="97.800,214 104.200,214 101,218.500" fill="#1a6cf0"/><polygon points="103.500,226.500 109.500,232.500 103.500,238.500 97.500,232.500" fill="#1464f0"/><rect x="99.500" y="228.500" width="8" height="8" fill="#0a1ce0" opacity="0.8"/><circle cx="103.500" cy="232.500" r="1.700" fill="#58b4ff"/><path d="M104,247 L107.25,250 H105.2 V251 H102.8 V250 H100.75 Z" fill="#1a6cf0"/><path d="M104,258.5 L107.25,255.5 H105.2 V254.5 H102.8 V255.5 H100.75 Z" fill="#1a6cf0"/><rect x="98" y="252" width="12" height="1.600" fill="#0a14d8"/><g stroke="#5c5c5c" stroke-width="0.8"><line x1="98" y1="268" x2="110" y2="268"/><line x1="98" y1="270.6" x2="110" y2="270.6"/><line x1="98" y1="273.2" x2="110" y2="273.2"/><line x1="98" y1="275.8" x2="110" y2="275.8"/><line x1="98" y1="278.4" x2="110" y2="278.4"/><line x1="98.300" y1="267.600" x2="98.300" y2="278.800" stroke-width="1.200"/></g><ellipse cx="102.800" cy="274.500" rx="2.400" ry="2" fill="#0a14d8"/><rect x="104.400" y="267.500" width="1" height="7" fill="#0a14d8"/><path d="M105,267.500 q0.500,2 3.500,3 v1.200 q-2.500,-1 -3.500,-2 z" fill="#0a14d8"/><path d="M99.500,287.500 v3 M107.500,287.500 v3" stroke="#d0d4dc" stroke-width="1.600"/><path d="M97.500,290.500 h12 v3 q0,3 -4,4.500 l-2,1 l-2,-1 q-4,-1.500 -4,-4.500 z" fill="#dcdfe6"/><g transform="translate(-67.500,255.300) scale(0.5)"><path d="M340.500,101.8 L335.500,105.5" stroke="#44a4f0" stroke-width="3"/><polygon points="331.600,109 332,102.6 338,107.6" fill="#44a4f0"/><path d="M351.500,113.3 L343.500,104" stroke="#1430e4" stroke-width="4.200"/><polygon points="339.300,100.3 348.300,100.3 341,108.8" fill="#1464f0"/><path d="M340.500,124.8 L335.500,121.1" stroke="#44a4f0" stroke-width="3"/><polygon points="331.600,117.6 332,124.0 338,119.0" fill="#44a4f0"/><path d="M351.500,113.3 L343.500,122.6" stroke="#1430e4" stroke-width="4.200"/><polygon points="339.300,126.3 348.300,126.3 341,117.8" fill="#1464f0"/><path d="M328.800,111 h17 v4.600 h-17 z" fill="#0a14d8"/><polygon points="345,106.500 354.300,113.300 345,120" fill="#0a14d8"/></g><path d="M97,331.500 l4.500,-4 v2.200 h8.500 l-1.400,1.800 l1.400,1.800 h-8.500 v2.200 z" fill="#1a6cf0"/><circle cx="104" cy="371" r="6.300" fill="#eef2fc" stroke="#3c4880" stroke-width="1.300"/><path d="M104,366.300 V371 L101.200,373.600" fill="none" stroke="#28346c" stroke-width="1.100"/><path d="M97,391.500 h3 v2.500 h7 v-2.500 h3 v5.500 h-13 z" fill="#1420c0"/><rect x="100" y="385" width="9.500" height="6.500" rx="1.500" fill="#9cc8f4" stroke="#4c84d0" stroke-width="0.8"/><path d="M102,391 l-0.500,2.500 l3,-2.500 z" fill="#9cc8f4"/><polygon points="99,437.500 99,443.500 108,440.500" fill="#28b428"/><path d="M98.500,460 h11" stroke="#7c7c7c" stroke-width="0.8"/><circle cx="100" cy="460" r="1.300" fill="#f0f0f0" stroke="#6c6c6c" stroke-width="0.7"/><circle cx="104" cy="460" r="1.300" fill="#f0f0f0" stroke="#6c6c6c" stroke-width="0.7"/><circle cx="108" cy="460" r="1.300" fill="#f0f0f0" stroke="#6c6c6c" stroke-width="0.7"/><g font-family="Liberation Sans,sans-serif" font-weight="bold" font-size="8.800" fill="#484848" letter-spacing="-0.3"><text x="98.300" y="436.300">Hz</text><text x="98.300" y="456.800">Hz</text></g></svg></body></html>
